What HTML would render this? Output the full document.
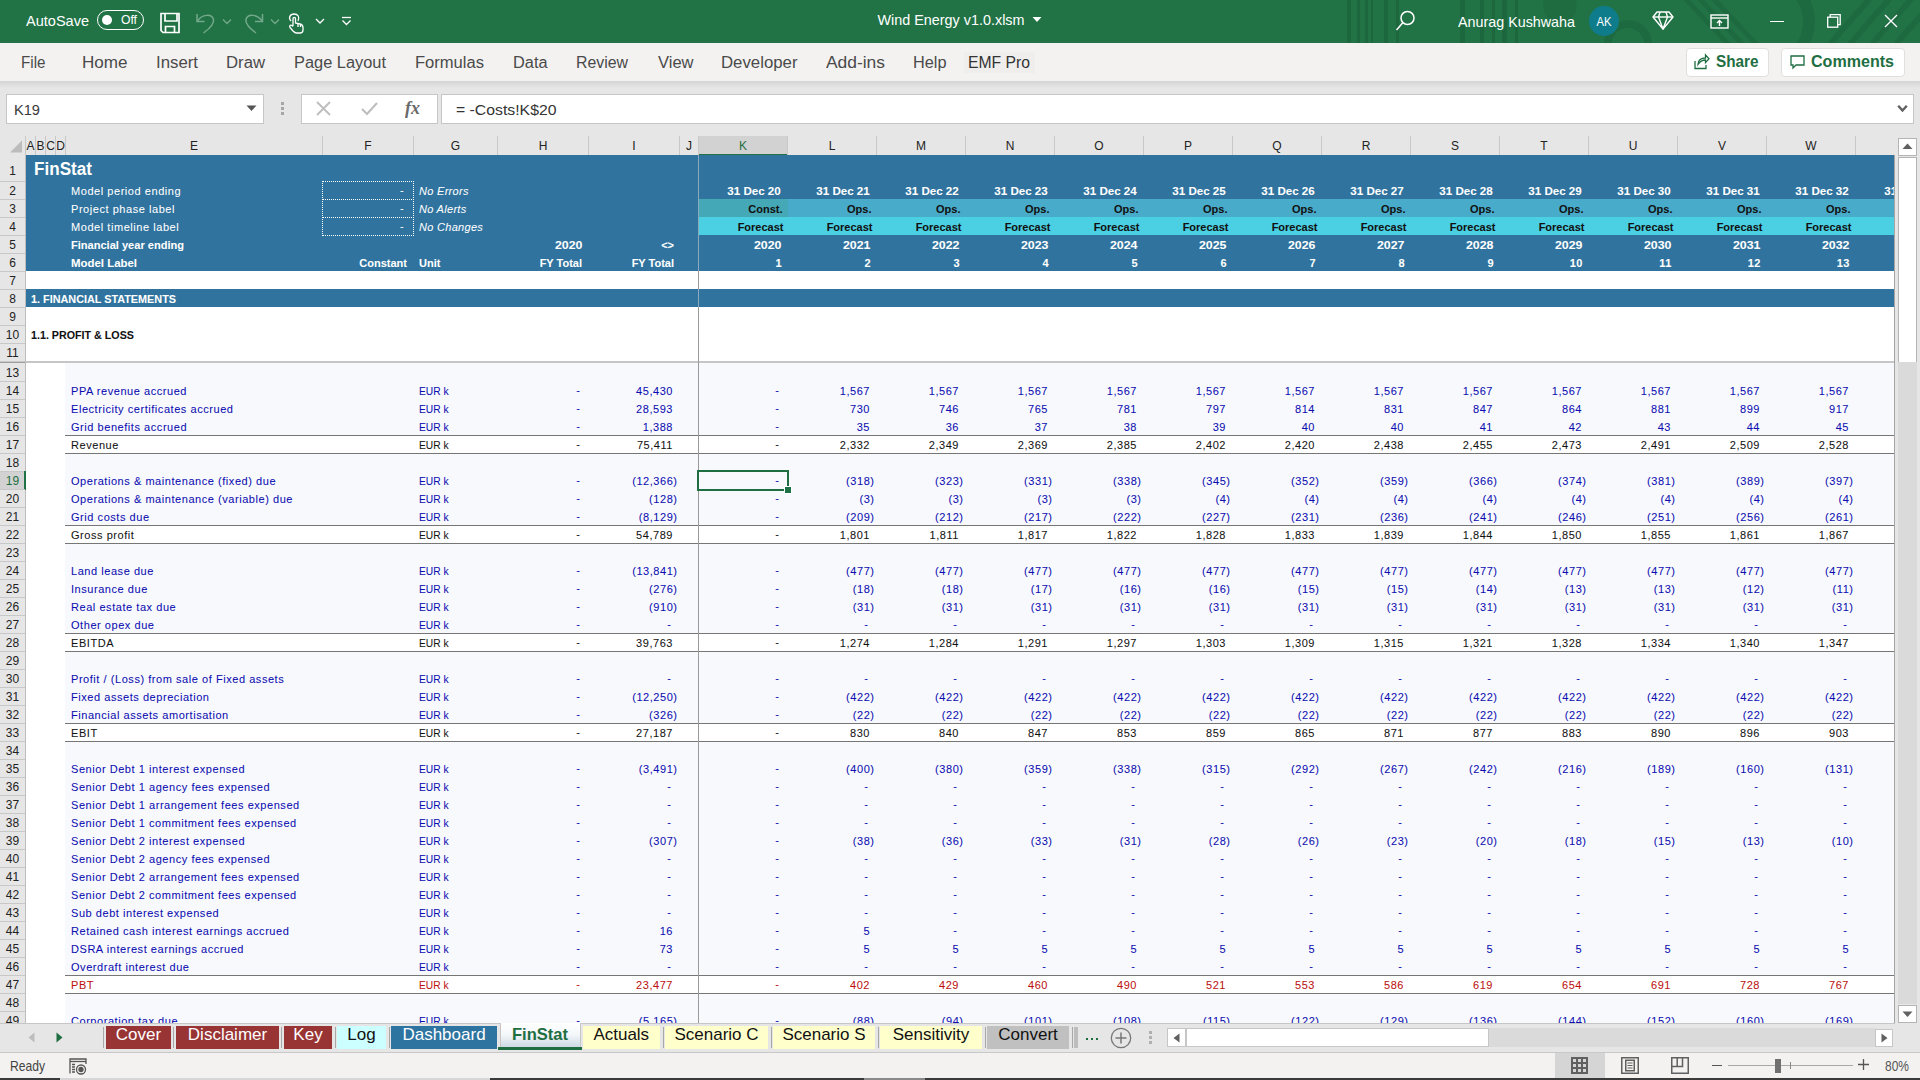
<!DOCTYPE html>
<html><head><meta charset="utf-8"><title>Wind Energy v1.0.xlsm - Excel</title>
<style>
*{box-sizing:border-box}
html,body{margin:0;padding:0}
body{width:1920px;height:1080px;overflow:hidden;position:relative;background:#fff;font-family:"Liberation Sans", sans-serif}
.a{position:absolute;white-space:nowrap}
.s{-webkit-text-stroke:0.05px currentColor}
svg.a{overflow:visible}
</style></head><body>
<div class="a" style="left:0px;top:0px;width:1920px;height:43px;background:#217346"></div>
<div class="a" style="left:1347px;top:0px;width:4px;height:43px;background:rgba(0,0,0,0.1)"></div>
<div class="a" style="left:1357px;top:0px;width:3px;height:43px;background:rgba(0,0,0,0.1)"></div>
<div class="a" style="left:1365px;top:0px;width:3px;height:43px;background:rgba(0,0,0,0.1)"></div>
<div class="a" style="left:1371px;top:0px;width:2px;height:43px;background:rgba(0,0,0,0.1)"></div>
<div class="a" style="left:1384px;top:0px;width:4px;height:43px;background:rgba(0,0,0,0.1)"></div>
<div class="a" style="left:1396px;top:0px;width:3px;height:43px;background:rgba(0,0,0,0.1)"></div>
<div class="a" style="left:1460px;top:0px;width:5px;height:43px;background:rgba(0,0,0,0.1)"></div>
<div class="a" style="left:1480px;top:0px;width:4px;height:43px;background:rgba(0,0,0,0.1)"></div>
<div class="a" style="left:1492px;top:0px;width:3px;height:43px;background:rgba(0,0,0,0.1)"></div>
<div class="a" style="left:1502px;top:0px;width:5px;height:43px;background:rgba(0,0,0,0.1)"></div>
<div class="a" style="left:1515px;top:0px;width:3px;height:43px;background:rgba(0,0,0,0.1)"></div>
<svg class="a" style="left:1500px;top:0" width="420" height="43"><g fill="none" stroke="rgba(0,0,0,0.075)"><circle cx="60" cy="6" r="17" fill="rgba(0,0,0,0.06)" stroke="none"/><circle cx="128" cy="44" r="20" stroke-width="8"/><path d="M182 -5 L232 48 M196 -5 L246 48 M210 -5 L260 48" stroke-width="5"/><path d="M300 -5 C312 10 312 33 300 48" stroke-width="12"/><path d="M330 44 L372 -4 M350 44 L392 -4 M372 44 L414 -4 M396 44 L438 -4" stroke-width="6"/></g></svg>
<div class="a" style="top:12.80px;font-size:15px;line-height:15px;color:#fff;left:26px;transform-origin:0 0;transform:scaleX(0.9685);">AutoSave</div>
<div class="a" style="left:97px;top:10px;width:47px;height:20px;border:1.5px solid #fff;border-radius:10px"></div>
<div class="a" style="left:101.75px;top:14.75px;width:10.5px;height:10.5px;background:#fff;border-radius:50%"></div>
<div class="a" style="top:13.27px;font-size:13.5px;line-height:13.5px;color:#fff;left:120.5px;transform-origin:0 0;transform:scaleX(0.9006);">Off</div>
<svg class="a" style="left:159px;top:12px" width="23" height="22" viewBox="0 0 23 22"><g fill="none" stroke="#fff" stroke-width="1.7"><path d="M2 1.5 H20 V20.5 H4 L2 18.5 Z"/><path d="M6 1.5 V9 H18 V1.5"/><path d="M6.5 20.5 V14.5 H15.5 V20.5"/></g></svg>
<svg class="a" style="left:195px;top:13px" width="22" height="21" viewBox="0 0 22 21"><g fill="none" stroke="#73a98a" stroke-width="1.5"><path d="M2 1 V8.5 H9.5"/><path d="M2.5 8 C7 1, 17 0.5, 18.5 6.5 C19.5 11, 14 16, 8.5 20"/></g></svg>
<svg class="a" style="left:222px;top:18px" width="10" height="8"><path d="M1 1.5 L5 5.5 L9 1.5" fill="none" stroke="#73a98a" stroke-width="1.3"/></svg>
<svg class="a" style="left:243px;top:13px" width="22" height="21" viewBox="0 0 22 21"><g fill="none" stroke="#73a98a" stroke-width="1.5"><path d="M19.5 1 V8.5 H12"/><path d="M19 8 C14.5 1, 4.5 0.5, 3 6.5 C2 11, 7.5 16, 13 20"/></g></svg>
<svg class="a" style="left:270px;top:18px" width="10" height="8"><path d="M1 1.5 L5 5.5 L9 1.5" fill="none" stroke="#73a98a" stroke-width="1.3"/></svg>
<svg class="a" style="left:288px;top:13px" width="17" height="21" viewBox="0 0 17 21"><g fill="none" stroke="#fff" stroke-width="1.3"><path d="M3 8 C0 5 2 1 6 1 C10 1 12 4 10 8"/><path d="M5 13 V5.5 C5 4 7.5 4 7.5 5.5 V10 L12 11 C14 11.5 15 12.5 15 14.5 V17 C15 19 13.5 20 12 20 H8.5 C7 20 6 19 5 18 L2 14.5 C1 13 2.5 11.5 4 12.5 L5 13.5"/><path d="M10 11 V14 M12.5 11.8 V14"/></g></svg>
<svg class="a" style="left:315px;top:17px" width="10" height="8"><path d="M1 2 L5 6 L9 2" fill="none" stroke="#fff" stroke-width="1.3"/></svg>
<svg class="a" style="left:341px;top:16px" width="11" height="11"><g fill="none" stroke="#fff" stroke-width="1.3"><path d="M1 1.5 H10"/><path d="M1.5 4.5 L5.5 8.5 L9.5 4.5"/></g></svg>
<div class="a" style="top:12.30px;font-size:15px;line-height:15px;color:#fff;left:951px;transform:translateX(-50%) scaleX(0.9583);">Wind Energy v1.0.xlsm</div>
<svg class="a" style="left:1032px;top:16px" width="10" height="8"><path d="M0.5 1 H9.5 L5 6 Z" fill="#fff"/></svg>
<svg class="a" style="left:1395px;top:9px" width="22" height="23" viewBox="0 0 22 23"><g fill="none" stroke="#fff" stroke-width="1.5"><circle cx="12.5" cy="9" r="6.5"/><path d="M8 13.5 L1.5 21"/></g></svg>
<div class="a" style="top:14.30px;font-size:15px;line-height:15px;color:#fff;left:1458px;transform-origin:0 0;transform:scaleX(0.9544);">Anurag Kushwaha</div>
<div class="a" style="left:1589px;top:6px;width:30px;height:30px;background:#0f7c8c;border-radius:50%"></div>
<div class="a" style="top:15.00px;font-size:13px;line-height:13px;color:#fff;left:1604px;transform:translateX(-50%) scaleX(0.8649);">AK</div>
<svg class="a" style="left:1652px;top:11px" width="22" height="19" viewBox="0 0 22 19"><g fill="none" stroke="#fff" stroke-width="1.4" stroke-linejoin="round"><path d="M5 1 H17 L21 6 L11 18 L1 6 Z"/><path d="M1 6 H21"/><path d="M8 1 L6.5 6 L11 18 L15.5 6 L14 1"/></g></svg>
<svg class="a" style="left:1710px;top:14px" width="19" height="15" viewBox="0 0 19 15"><g fill="none" stroke="#fff" stroke-width="1.4"><rect x="1" y="1" width="17" height="13"/><path d="M1 4 H18"/><path d="M9.5 12 V6.5 M7 9 L9.5 6.5 L12 9"/></g></svg>
<div class="a" style="left:1770px;top:21px;width:14px;height:1.2px;background:#fff"></div>
<svg class="a" style="left:1827px;top:14px" width="14" height="14" viewBox="0 0 14 14"><g fill="none" stroke="#fff" stroke-width="1.3"><rect x="0.7" y="3.2" width="10" height="10"/><path d="M3.2 3.2 V0.7 H13.2 V10.7 H10.7"/></g></svg>
<svg class="a" style="left:1884px;top:14px" width="14" height="14" viewBox="0 0 14 14"><path d="M1 1 L13 13 M13 1 L1 13" stroke="#fff" stroke-width="1.4"/></svg>
<div class="a" style="left:0px;top:43px;width:1920px;height:38px;background:#f3f2f1"></div>
<div class="a" style="left:0px;top:81px;width:1920px;height:7px;background:linear-gradient(#d4d4d4,#e6e6e6)"></div>
<div class="a" style="left:964px;top:52px;width:71px;height:21px;background:#efeeed"></div>
<div class="a" style="top:54.96px;font-size:16px;line-height:16px;color:#4a4a4a;left:21px;transform-origin:0 0;transform:scaleX(0.9503);">File</div>
<div class="a" style="top:54.96px;font-size:16px;line-height:16px;color:#4a4a4a;left:82px;transform-origin:0 0;transform:scaleX(1.0659);">Home</div>
<div class="a" style="top:54.96px;font-size:16px;line-height:16px;color:#4a4a4a;left:156px;transform-origin:0 0;transform:scaleX(1.0496);">Insert</div>
<div class="a" style="top:54.96px;font-size:16px;line-height:16px;color:#4a4a4a;left:226px;transform-origin:0 0;transform:scaleX(1.0444);">Draw</div>
<div class="a" style="top:54.96px;font-size:16px;line-height:16px;color:#4a4a4a;left:294px;transform-origin:0 0;transform:scaleX(1.0238);">Page Layout</div>
<div class="a" style="top:54.96px;font-size:16px;line-height:16px;color:#4a4a4a;left:415px;transform-origin:0 0;transform:scaleX(1.0347);">Formulas</div>
<div class="a" style="top:54.96px;font-size:16px;line-height:16px;color:#4a4a4a;left:512.5px;transform-origin:0 0;transform:scaleX(1.0208);">Data</div>
<div class="a" style="top:54.96px;font-size:16px;line-height:16px;color:#4a4a4a;left:576px;transform-origin:0 0;transform:scaleX(0.9911);">Review</div>
<div class="a" style="top:54.96px;font-size:16px;line-height:16px;color:#4a4a4a;left:657.5px;transform-origin:0 0;transform:scaleX(1.0323);">View</div>
<div class="a" style="top:54.96px;font-size:16px;line-height:16px;color:#4a4a4a;left:721px;transform-origin:0 0;transform:scaleX(1.0488);">Developer</div>
<div class="a" style="top:54.96px;font-size:16px;line-height:16px;color:#4a4a4a;left:826px;transform-origin:0 0;transform:scaleX(1.0876);">Add-ins</div>
<div class="a" style="top:54.96px;font-size:16px;line-height:16px;color:#4a4a4a;left:912.5px;transform-origin:0 0;transform:scaleX(1.0180);">Help</div>
<div class="a" style="top:54.96px;font-size:16px;line-height:16px;color:#333;left:967.5px;transform-origin:0 0;transform:scaleX(0.9822);">EMF Pro</div>
<div class="a" style="left:1686px;top:47.5px;width:83px;height:29px;background:#fff;border:1px solid #e1dfdd;border-radius:4px"></div>
<svg class="a" style="left:1694px;top:53px" width="16" height="17" viewBox="0 0 16 17"><g fill="none" stroke="#1e6e42" stroke-width="1.3"><path d="M1 8 V15.5 H12 V12"/><path d="M4 11.5 C4 7 7 5 11.5 5 V2 L15 5.8 L11.5 9.6 V7 C8 7 6 8.5 4 11.5 Z"/></g></svg>
<div class="a" style="top:54.46px;font-size:16px;line-height:16px;color:#1e6e42;font-weight:700;left:1715.5px;transform-origin:0 0;transform:scaleX(0.9557);">Share</div>
<div class="a" style="left:1780.5px;top:47.5px;width:124px;height:29px;background:#fff;border:1px solid #e1dfdd;border-radius:4px"></div>
<svg class="a" style="left:1790px;top:55px" width="15" height="15" viewBox="0 0 15 15"><path d="M1 1 H14 V10 H6 L3 13 V10 H1 Z" fill="none" stroke="#1e6e42" stroke-width="1.3"/></svg>
<div class="a" style="top:54.46px;font-size:16px;line-height:16px;color:#1e6e42;font-weight:700;left:1810.5px;transform-origin:0 0;transform:scaleX(1.0038);">Comments</div>
<div class="a" style="left:0px;top:88px;width:1920px;height:48px;background:#e6e6e6"></div>
<div class="a" style="left:6px;top:94px;width:258px;height:30px;background:#fff;border:1px solid #c6c6c6"></div>
<div class="a" style="top:101.88px;font-size:15.5px;line-height:15.5px;color:#3a3a3a;left:13.5px;transform-origin:0 0;transform:scaleX(0.9422);">K19</div>
<svg class="a" style="left:246px;top:105px" width="11" height="7"><path d="M0.5 0.5 H10.5 L5.5 6 Z" fill="#555"/></svg>
<div class="a" style="left:281px;top:102px;width:3px;height:3px;background:#a6a6a6"></div>
<div class="a" style="left:281px;top:107px;width:3px;height:3px;background:#a6a6a6"></div>
<div class="a" style="left:281px;top:112px;width:3px;height:3px;background:#a6a6a6"></div>
<div class="a" style="left:301px;top:94px;width:137px;height:30px;background:#fff;border:1px solid #c6c6c6"></div>
<svg class="a" style="left:316px;top:101px" width="15" height="15"><path d="M1 1 L14 14 M14 1 L1 14" stroke="#bdbdbd" stroke-width="1.8"/></svg>
<svg class="a" style="left:361px;top:102px" width="17" height="13"><path d="M1 7 L6 12 L16 1" fill="none" stroke="#bdbdbd" stroke-width="2"/></svg>
<div class="a" style="top:98.42px;font-size:19px;line-height:19px;color:#6a6a6a;font-weight:700;font-style:italic;left:405px;transform-origin:0 0;transform:scaleX(0.9464);font-family:'Liberation Serif',serif;">fx</div>
<div class="a" style="left:441px;top:94px;width:1473px;height:30px;background:#fff;border:1px solid #c6c6c6"></div>
<div class="a" style="top:101.80px;font-size:15px;line-height:15px;color:#333;left:455.5px;transform-origin:0 0;transform:scaleX(1.0527);">= -Costs!K$20</div>
<svg class="a" style="left:1897px;top:104px" width="11" height="9"><path d="M1.2 1.8 L5.5 6.5 L9.8 1.8" fill="none" stroke="#606060" stroke-width="2.4"/></svg>
<div class="a" style="left:0px;top:136px;width:1896px;height:20px;background:#e6e6e6;border-bottom:1px solid #c9c2bd"></div>
<svg class="a" style="left:9px;top:140px" width="14" height="13"><path d="M13 0.5 V12.5 H1 Z" fill="#bcbcbc"/></svg>
<div class="a" style="left:25px;top:136px;width:1px;height:19px;background:#c8c8c8"></div>
<div class="a" style="left:35px;top:136px;width:1px;height:19px;background:#c8c8c8"></div>
<div class="a" style="top:139.84px;font-size:12px;line-height:12px;color:#222;left:30.5px;transform:translateX(-50%) ;">A</div>
<div class="a" style="left:45px;top:136px;width:1px;height:19px;background:#c8c8c8"></div>
<div class="a" style="top:139.84px;font-size:12px;line-height:12px;color:#222;left:40.5px;transform:translateX(-50%) ;">B</div>
<div class="a" style="left:55px;top:136px;width:1px;height:19px;background:#c8c8c8"></div>
<div class="a" style="top:139.84px;font-size:12px;line-height:12px;color:#222;left:50.5px;transform:translateX(-50%) ;">C</div>
<div class="a" style="left:65px;top:136px;width:1px;height:19px;background:#c8c8c8"></div>
<div class="a" style="top:139.84px;font-size:12px;line-height:12px;color:#222;left:60.5px;transform:translateX(-50%) ;">D</div>
<div class="a" style="left:322px;top:136px;width:1px;height:19px;background:#c8c8c8"></div>
<div class="a" style="top:139.84px;font-size:12px;line-height:12px;color:#222;left:194.0px;transform:translateX(-50%) ;">E</div>
<div class="a" style="left:413px;top:136px;width:1px;height:19px;background:#c8c8c8"></div>
<div class="a" style="top:139.84px;font-size:12px;line-height:12px;color:#222;left:368.0px;transform:translateX(-50%) ;">F</div>
<div class="a" style="left:497px;top:136px;width:1px;height:19px;background:#c8c8c8"></div>
<div class="a" style="top:139.84px;font-size:12px;line-height:12px;color:#222;left:455.5px;transform:translateX(-50%) ;">G</div>
<div class="a" style="left:588px;top:136px;width:1px;height:19px;background:#c8c8c8"></div>
<div class="a" style="top:139.84px;font-size:12px;line-height:12px;color:#222;left:543.0px;transform:translateX(-50%) ;">H</div>
<div class="a" style="left:679px;top:136px;width:1px;height:19px;background:#c8c8c8"></div>
<div class="a" style="top:139.84px;font-size:12px;line-height:12px;color:#222;left:634.0px;transform:translateX(-50%) ;">I</div>
<div class="a" style="left:698px;top:136px;width:1px;height:19px;background:#c8c8c8"></div>
<div class="a" style="top:139.84px;font-size:12px;line-height:12px;color:#222;left:689.0px;transform:translateX(-50%) ;">J</div>
<div class="a" style="left:699px;top:136px;width:88px;height:19px;background:#d2d2d2"></div>
<div class="a" style="left:699px;top:154px;width:88px;height:2px;background:#217346"></div>
<div class="a" style="left:787px;top:136px;width:1px;height:19px;background:#c8c8c8"></div>
<div class="a" style="top:139.84px;font-size:12px;line-height:12px;color:#1e6e42;left:743.0px;transform:translateX(-50%) ;">K</div>
<div class="a" style="left:876px;top:136px;width:1px;height:19px;background:#c8c8c8"></div>
<div class="a" style="top:139.84px;font-size:12px;line-height:12px;color:#222;left:832.0px;transform:translateX(-50%) ;">L</div>
<div class="a" style="left:965px;top:136px;width:1px;height:19px;background:#c8c8c8"></div>
<div class="a" style="top:139.84px;font-size:12px;line-height:12px;color:#222;left:921.0px;transform:translateX(-50%) ;">M</div>
<div class="a" style="left:1054px;top:136px;width:1px;height:19px;background:#c8c8c8"></div>
<div class="a" style="top:139.84px;font-size:12px;line-height:12px;color:#222;left:1010.0px;transform:translateX(-50%) ;">N</div>
<div class="a" style="left:1143px;top:136px;width:1px;height:19px;background:#c8c8c8"></div>
<div class="a" style="top:139.84px;font-size:12px;line-height:12px;color:#222;left:1099.0px;transform:translateX(-50%) ;">O</div>
<div class="a" style="left:1232px;top:136px;width:1px;height:19px;background:#c8c8c8"></div>
<div class="a" style="top:139.84px;font-size:12px;line-height:12px;color:#222;left:1188.0px;transform:translateX(-50%) ;">P</div>
<div class="a" style="left:1321px;top:136px;width:1px;height:19px;background:#c8c8c8"></div>
<div class="a" style="top:139.84px;font-size:12px;line-height:12px;color:#222;left:1277.0px;transform:translateX(-50%) ;">Q</div>
<div class="a" style="left:1410px;top:136px;width:1px;height:19px;background:#c8c8c8"></div>
<div class="a" style="top:139.84px;font-size:12px;line-height:12px;color:#222;left:1366.0px;transform:translateX(-50%) ;">R</div>
<div class="a" style="left:1499px;top:136px;width:1px;height:19px;background:#c8c8c8"></div>
<div class="a" style="top:139.84px;font-size:12px;line-height:12px;color:#222;left:1455.0px;transform:translateX(-50%) ;">S</div>
<div class="a" style="left:1588px;top:136px;width:1px;height:19px;background:#c8c8c8"></div>
<div class="a" style="top:139.84px;font-size:12px;line-height:12px;color:#222;left:1544.0px;transform:translateX(-50%) ;">T</div>
<div class="a" style="left:1677px;top:136px;width:1px;height:19px;background:#c8c8c8"></div>
<div class="a" style="top:139.84px;font-size:12px;line-height:12px;color:#222;left:1633.0px;transform:translateX(-50%) ;">U</div>
<div class="a" style="left:1766px;top:136px;width:1px;height:19px;background:#c8c8c8"></div>
<div class="a" style="top:139.84px;font-size:12px;line-height:12px;color:#222;left:1722.0px;transform:translateX(-50%) ;">V</div>
<div class="a" style="left:1855px;top:136px;width:1px;height:19px;background:#c8c8c8"></div>
<div class="a" style="top:139.84px;font-size:12px;line-height:12px;color:#222;left:1811.0px;transform:translateX(-50%) ;">W</div>
<div class="a" style="left:1944px;top:136px;width:1px;height:19px;background:#c8c8c8"></div>
<div class="a" style="left:0px;top:155px;width:25px;height:868px;background:#e6e6e6"></div>
<div class="a" style="left:25px;top:155px;width:1px;height:868px;background:#bdbdbd"></div>
<div class="a" style="left:0px;top:181px;width:25px;height:1px;background:#c8c8c8"></div>
<div class="a" style="top:165.34px;font-size:12px;line-height:12px;color:#222;left:12.5px;transform:translateX(-50%) ;">1</div>
<div class="a" style="left:0px;top:199px;width:25px;height:1px;background:#c8c8c8"></div>
<div class="a" style="top:184.84px;font-size:12px;line-height:12px;color:#222;left:12.5px;transform:translateX(-50%) ;">2</div>
<div class="a" style="left:0px;top:217px;width:25px;height:1px;background:#c8c8c8"></div>
<div class="a" style="top:202.84px;font-size:12px;line-height:12px;color:#222;left:12.5px;transform:translateX(-50%) ;">3</div>
<div class="a" style="left:0px;top:235px;width:25px;height:1px;background:#c8c8c8"></div>
<div class="a" style="top:220.84px;font-size:12px;line-height:12px;color:#222;left:12.5px;transform:translateX(-50%) ;">4</div>
<div class="a" style="left:0px;top:253px;width:25px;height:1px;background:#c8c8c8"></div>
<div class="a" style="top:238.84px;font-size:12px;line-height:12px;color:#222;left:12.5px;transform:translateX(-50%) ;">5</div>
<div class="a" style="left:0px;top:271px;width:25px;height:1px;background:#c8c8c8"></div>
<div class="a" style="top:256.84px;font-size:12px;line-height:12px;color:#222;left:12.5px;transform:translateX(-50%) ;">6</div>
<div class="a" style="left:0px;top:289px;width:25px;height:1px;background:#c8c8c8"></div>
<div class="a" style="top:274.84px;font-size:12px;line-height:12px;color:#222;left:12.5px;transform:translateX(-50%) ;">7</div>
<div class="a" style="left:0px;top:307px;width:25px;height:1px;background:#c8c8c8"></div>
<div class="a" style="top:292.84px;font-size:12px;line-height:12px;color:#222;left:12.5px;transform:translateX(-50%) ;">8</div>
<div class="a" style="left:0px;top:325px;width:25px;height:1px;background:#c8c8c8"></div>
<div class="a" style="top:310.84px;font-size:12px;line-height:12px;color:#222;left:12.5px;transform:translateX(-50%) ;">9</div>
<div class="a" style="left:0px;top:343px;width:25px;height:1px;background:#c8c8c8"></div>
<div class="a" style="top:328.84px;font-size:12px;line-height:12px;color:#222;left:12.5px;transform:translateX(-50%) ;">10</div>
<div class="a" style="left:0px;top:361px;width:25px;height:1px;background:#c8c8c8"></div>
<div class="a" style="top:346.84px;font-size:12px;line-height:12px;color:#222;left:12.5px;transform:translateX(-50%) ;">11</div>
<div class="a" style="left:0px;top:381px;width:25px;height:1px;background:#c8c8c8"></div>
<div class="a" style="top:366.84px;font-size:12px;line-height:12px;color:#222;left:12.5px;transform:translateX(-50%) ;">13</div>
<div class="a" style="left:0px;top:399px;width:25px;height:1px;background:#c8c8c8"></div>
<div class="a" style="top:384.84px;font-size:12px;line-height:12px;color:#222;left:12.5px;transform:translateX(-50%) ;">14</div>
<div class="a" style="left:0px;top:417px;width:25px;height:1px;background:#c8c8c8"></div>
<div class="a" style="top:402.84px;font-size:12px;line-height:12px;color:#222;left:12.5px;transform:translateX(-50%) ;">15</div>
<div class="a" style="left:0px;top:435px;width:25px;height:1px;background:#c8c8c8"></div>
<div class="a" style="top:420.84px;font-size:12px;line-height:12px;color:#222;left:12.5px;transform:translateX(-50%) ;">16</div>
<div class="a" style="left:0px;top:453px;width:25px;height:1px;background:#c8c8c8"></div>
<div class="a" style="top:438.84px;font-size:12px;line-height:12px;color:#222;left:12.5px;transform:translateX(-50%) ;">17</div>
<div class="a" style="left:0px;top:471px;width:25px;height:1px;background:#c8c8c8"></div>
<div class="a" style="top:456.84px;font-size:12px;line-height:12px;color:#222;left:12.5px;transform:translateX(-50%) ;">18</div>
<div class="a" style="left:0px;top:472px;width:25px;height:17px;background:#d2d2d2"></div>
<div class="a" style="left:24px;top:471px;width:2px;height:18.5px;background:#217346"></div>
<div class="a" style="left:0px;top:489px;width:25px;height:1px;background:#c8c8c8"></div>
<div class="a" style="top:474.84px;font-size:12px;line-height:12px;color:#1e6e42;left:12.5px;transform:translateX(-50%) ;">19</div>
<div class="a" style="left:0px;top:507px;width:25px;height:1px;background:#c8c8c8"></div>
<div class="a" style="top:492.84px;font-size:12px;line-height:12px;color:#222;left:12.5px;transform:translateX(-50%) ;">20</div>
<div class="a" style="left:0px;top:525px;width:25px;height:1px;background:#c8c8c8"></div>
<div class="a" style="top:510.84px;font-size:12px;line-height:12px;color:#222;left:12.5px;transform:translateX(-50%) ;">21</div>
<div class="a" style="left:0px;top:543px;width:25px;height:1px;background:#c8c8c8"></div>
<div class="a" style="top:528.84px;font-size:12px;line-height:12px;color:#222;left:12.5px;transform:translateX(-50%) ;">22</div>
<div class="a" style="left:0px;top:561px;width:25px;height:1px;background:#c8c8c8"></div>
<div class="a" style="top:546.84px;font-size:12px;line-height:12px;color:#222;left:12.5px;transform:translateX(-50%) ;">23</div>
<div class="a" style="left:0px;top:579px;width:25px;height:1px;background:#c8c8c8"></div>
<div class="a" style="top:564.84px;font-size:12px;line-height:12px;color:#222;left:12.5px;transform:translateX(-50%) ;">24</div>
<div class="a" style="left:0px;top:597px;width:25px;height:1px;background:#c8c8c8"></div>
<div class="a" style="top:582.84px;font-size:12px;line-height:12px;color:#222;left:12.5px;transform:translateX(-50%) ;">25</div>
<div class="a" style="left:0px;top:615px;width:25px;height:1px;background:#c8c8c8"></div>
<div class="a" style="top:600.84px;font-size:12px;line-height:12px;color:#222;left:12.5px;transform:translateX(-50%) ;">26</div>
<div class="a" style="left:0px;top:633px;width:25px;height:1px;background:#c8c8c8"></div>
<div class="a" style="top:618.84px;font-size:12px;line-height:12px;color:#222;left:12.5px;transform:translateX(-50%) ;">27</div>
<div class="a" style="left:0px;top:651px;width:25px;height:1px;background:#c8c8c8"></div>
<div class="a" style="top:636.84px;font-size:12px;line-height:12px;color:#222;left:12.5px;transform:translateX(-50%) ;">28</div>
<div class="a" style="left:0px;top:669px;width:25px;height:1px;background:#c8c8c8"></div>
<div class="a" style="top:654.84px;font-size:12px;line-height:12px;color:#222;left:12.5px;transform:translateX(-50%) ;">29</div>
<div class="a" style="left:0px;top:687px;width:25px;height:1px;background:#c8c8c8"></div>
<div class="a" style="top:672.84px;font-size:12px;line-height:12px;color:#222;left:12.5px;transform:translateX(-50%) ;">30</div>
<div class="a" style="left:0px;top:705px;width:25px;height:1px;background:#c8c8c8"></div>
<div class="a" style="top:690.84px;font-size:12px;line-height:12px;color:#222;left:12.5px;transform:translateX(-50%) ;">31</div>
<div class="a" style="left:0px;top:723px;width:25px;height:1px;background:#c8c8c8"></div>
<div class="a" style="top:708.84px;font-size:12px;line-height:12px;color:#222;left:12.5px;transform:translateX(-50%) ;">32</div>
<div class="a" style="left:0px;top:741px;width:25px;height:1px;background:#c8c8c8"></div>
<div class="a" style="top:726.84px;font-size:12px;line-height:12px;color:#222;left:12.5px;transform:translateX(-50%) ;">33</div>
<div class="a" style="left:0px;top:759px;width:25px;height:1px;background:#c8c8c8"></div>
<div class="a" style="top:744.84px;font-size:12px;line-height:12px;color:#222;left:12.5px;transform:translateX(-50%) ;">34</div>
<div class="a" style="left:0px;top:777px;width:25px;height:1px;background:#c8c8c8"></div>
<div class="a" style="top:762.84px;font-size:12px;line-height:12px;color:#222;left:12.5px;transform:translateX(-50%) ;">35</div>
<div class="a" style="left:0px;top:795px;width:25px;height:1px;background:#c8c8c8"></div>
<div class="a" style="top:780.84px;font-size:12px;line-height:12px;color:#222;left:12.5px;transform:translateX(-50%) ;">36</div>
<div class="a" style="left:0px;top:813px;width:25px;height:1px;background:#c8c8c8"></div>
<div class="a" style="top:798.84px;font-size:12px;line-height:12px;color:#222;left:12.5px;transform:translateX(-50%) ;">37</div>
<div class="a" style="left:0px;top:831px;width:25px;height:1px;background:#c8c8c8"></div>
<div class="a" style="top:816.84px;font-size:12px;line-height:12px;color:#222;left:12.5px;transform:translateX(-50%) ;">38</div>
<div class="a" style="left:0px;top:849px;width:25px;height:1px;background:#c8c8c8"></div>
<div class="a" style="top:834.84px;font-size:12px;line-height:12px;color:#222;left:12.5px;transform:translateX(-50%) ;">39</div>
<div class="a" style="left:0px;top:867px;width:25px;height:1px;background:#c8c8c8"></div>
<div class="a" style="top:852.84px;font-size:12px;line-height:12px;color:#222;left:12.5px;transform:translateX(-50%) ;">40</div>
<div class="a" style="left:0px;top:885px;width:25px;height:1px;background:#c8c8c8"></div>
<div class="a" style="top:870.84px;font-size:12px;line-height:12px;color:#222;left:12.5px;transform:translateX(-50%) ;">41</div>
<div class="a" style="left:0px;top:903px;width:25px;height:1px;background:#c8c8c8"></div>
<div class="a" style="top:888.84px;font-size:12px;line-height:12px;color:#222;left:12.5px;transform:translateX(-50%) ;">42</div>
<div class="a" style="left:0px;top:921px;width:25px;height:1px;background:#c8c8c8"></div>
<div class="a" style="top:906.84px;font-size:12px;line-height:12px;color:#222;left:12.5px;transform:translateX(-50%) ;">43</div>
<div class="a" style="left:0px;top:939px;width:25px;height:1px;background:#c8c8c8"></div>
<div class="a" style="top:924.84px;font-size:12px;line-height:12px;color:#222;left:12.5px;transform:translateX(-50%) ;">44</div>
<div class="a" style="left:0px;top:957px;width:25px;height:1px;background:#c8c8c8"></div>
<div class="a" style="top:942.84px;font-size:12px;line-height:12px;color:#222;left:12.5px;transform:translateX(-50%) ;">45</div>
<div class="a" style="left:0px;top:975px;width:25px;height:1px;background:#c8c8c8"></div>
<div class="a" style="top:960.84px;font-size:12px;line-height:12px;color:#222;left:12.5px;transform:translateX(-50%) ;">46</div>
<div class="a" style="left:0px;top:993px;width:25px;height:1px;background:#c8c8c8"></div>
<div class="a" style="top:978.84px;font-size:12px;line-height:12px;color:#222;left:12.5px;transform:translateX(-50%) ;">47</div>
<div class="a" style="left:0px;top:1011px;width:25px;height:1px;background:#c8c8c8"></div>
<div class="a" style="top:996.84px;font-size:12px;line-height:12px;color:#222;left:12.5px;transform:translateX(-50%) ;">48</div>
<div class="a" style="top:1014.84px;font-size:12px;line-height:12px;color:#222;left:12.5px;transform:translateX(-50%) ;">49</div>
<div class="a" style="left:0px;top:362px;width:25px;height:1px;background:#9e9e9e"></div>
<div class="a" style="left:26px;top:155px;width:1868px;height:116px;background:#30739e"></div>
<div class="a" style="left:26px;top:289px;width:1868px;height:18px;background:#30739e"></div>
<div class="a" style="left:699px;top:199px;width:89px;height:18px;background:#45a8b6"></div>
<div class="a" style="left:788px;top:199px;width:1106px;height:18px;background:#48abca"></div>
<div class="a" style="left:699px;top:217px;width:1195px;height:18px;background:#4bcfe2"></div>
<div class="a" style="left:65px;top:363px;width:1829px;height:660px;background:#f7f9fd"></div>
<div class="a" style="left:65px;top:435px;width:1829px;height:19px;background:#fff;border-top:1px solid #767676;border-bottom:1px solid #767676"></div>
<div class="a" style="left:65px;top:525px;width:1829px;height:19px;background:#fff;border-top:1px solid #767676;border-bottom:1px solid #767676"></div>
<div class="a" style="left:65px;top:633px;width:1829px;height:19px;background:#fff;border-top:1px solid #767676;border-bottom:1px solid #767676"></div>
<div class="a" style="left:65px;top:723px;width:1829px;height:19px;background:#fff;border-top:1px solid #767676;border-bottom:1px solid #767676"></div>
<div class="a" style="left:65px;top:975px;width:1829px;height:19px;background:#fff;border-top:1px solid #767676;border-bottom:1px solid #767676"></div>
<div class="a" style="left:26px;top:361px;width:1868px;height:2px;background:#c6c6c6"></div>
<div class="a" style="left:698px;top:155px;width:1px;height:868px;background:#9a9a9a"></div>
<div class="a" style="left:698px;top:156px;width:1px;height:115px;background:#88a9be"></div>
<div class="a" style="left:698px;top:289px;width:1px;height:18px;background:#88a9be"></div>
<div class="a" style="left:1894px;top:155px;width:1px;height:868px;background:#a4a4a4"></div>
<div class="a" style="left:322px;top:181px;width:92px;height:55px;border:1.3px dotted #fff"></div>
<div class="a" style="left:322px;top:199px;width:92px;height:1px;border-top:1.3px dotted #fff"></div>
<div class="a" style="left:322px;top:217px;width:92px;height:1px;border-top:1.3px dotted #fff"></div>
<div class="a" style="left:0;top:0;width:1920px;height:1080px;clip-path:inset(0 26px 57px 0)">
<div class="a" style="top:160.69px;font-size:17.5px;line-height:17.5px;color:#fff;font-weight:700;left:34px;transform-origin:0 0;transform:scaleX(0.9779);">FinStat</div>
<div class="a s" style="top:185.69px;font-size:11px;line-height:11px;color:#fff;letter-spacing:0.55px;left:71px;">Model period ending</div>
<div class="a s" style="top:185.69px;font-size:11px;line-height:11px;color:#fff;font-style:italic;letter-spacing:0.3px;left:419px;">No Errors</div>
<div class="a s" style="top:185.19px;font-size:11px;line-height:11px;color:#fff;left:400px;">-</div>
<div class="a s" style="top:203.69px;font-size:11px;line-height:11px;color:#fff;letter-spacing:0.55px;left:71px;">Project phase label</div>
<div class="a s" style="top:203.69px;font-size:11px;line-height:11px;color:#fff;font-style:italic;letter-spacing:0.3px;left:419px;">No Alerts</div>
<div class="a s" style="top:203.19px;font-size:11px;line-height:11px;color:#fff;left:400px;">-</div>
<div class="a s" style="top:221.69px;font-size:11px;line-height:11px;color:#fff;letter-spacing:0.55px;left:71px;">Model timeline label</div>
<div class="a s" style="top:221.69px;font-size:11px;line-height:11px;color:#fff;font-style:italic;letter-spacing:0.3px;left:419px;">No Changes</div>
<div class="a s" style="top:221.19px;font-size:11px;line-height:11px;color:#fff;left:400px;">-</div>
<div class="a s" style="top:239.69px;font-size:11px;line-height:11px;color:#fff;font-weight:700;left:71px;transform-origin:0 0;transform:scaleX(1.0046);">Financial year ending</div>
<div class="a s" style="top:257.69px;font-size:11px;line-height:11px;color:#fff;font-weight:700;left:71px;transform-origin:0 0;transform:scaleX(1.0383);">Model Label</div>
<div class="a s" style="top:257.69px;font-size:11px;line-height:11px;color:#fff;font-weight:700;right:1513px;">Constant</div>
<div class="a s" style="top:257.69px;font-size:11px;line-height:11px;color:#fff;font-weight:700;left:419px;">Unit</div>
<div class="a s" style="top:239.69px;font-size:11px;line-height:11px;color:#fff;font-weight:700;right:1338px;transform-origin:100% 0;transform:scaleX(1.1232);">2020</div>
<div class="a s" style="top:257.69px;font-size:11px;line-height:11px;color:#fff;font-weight:700;right:1338px;">FY Total</div>
<div class="a s" style="top:239.69px;font-size:11px;line-height:11px;color:#fff;font-weight:700;right:1246px;">&lt;&gt;</div>
<div class="a s" style="top:257.69px;font-size:11px;line-height:11px;color:#fff;font-weight:700;right:1246px;">FY Total</div>
<div class="a s" style="top:185.69px;font-size:11px;line-height:11px;color:#fff;font-weight:700;right:1139.0px;transform-origin:100% 0;transform:scaleX(1.0539);">31 Dec 20</div>
<div class="a s" style="top:203.69px;font-size:11px;line-height:11px;color:#111;font-weight:700;right:1137.5px;">Const.</div>
<div class="a s" style="top:221.69px;font-size:11px;line-height:11px;color:#111;font-weight:700;right:1136.5px;">Forecast</div>
<div class="a s" style="top:239.69px;font-size:11px;line-height:11px;color:#fff;font-weight:700;right:1138.5px;transform-origin:100% 0;transform:scaleX(1.1232);">2020</div>
<div class="a s" style="top:257.69px;font-size:11px;line-height:11px;color:#fff;font-weight:700;letter-spacing:0.6px;right:1138.5px;margin-right:-0.6px;">1</div>
<div class="a s" style="top:185.69px;font-size:11px;line-height:11px;color:#fff;font-weight:700;right:1050.0px;transform-origin:100% 0;transform:scaleX(1.0539);">31 Dec 21</div>
<div class="a s" style="top:203.69px;font-size:11px;line-height:11px;color:#111;font-weight:700;right:1048.5px;">Ops.</div>
<div class="a s" style="top:221.69px;font-size:11px;line-height:11px;color:#111;font-weight:700;right:1047.5px;">Forecast</div>
<div class="a s" style="top:239.69px;font-size:11px;line-height:11px;color:#fff;font-weight:700;right:1049.5px;transform-origin:100% 0;transform:scaleX(1.1232);">2021</div>
<div class="a s" style="top:257.69px;font-size:11px;line-height:11px;color:#fff;font-weight:700;letter-spacing:0.6px;right:1049.5px;margin-right:-0.6px;">2</div>
<div class="a s" style="top:185.69px;font-size:11px;line-height:11px;color:#fff;font-weight:700;right:961.0px;transform-origin:100% 0;transform:scaleX(1.0539);">31 Dec 22</div>
<div class="a s" style="top:203.69px;font-size:11px;line-height:11px;color:#111;font-weight:700;right:959.5px;">Ops.</div>
<div class="a s" style="top:221.69px;font-size:11px;line-height:11px;color:#111;font-weight:700;right:958.5px;">Forecast</div>
<div class="a s" style="top:239.69px;font-size:11px;line-height:11px;color:#fff;font-weight:700;right:960.5px;transform-origin:100% 0;transform:scaleX(1.1232);">2022</div>
<div class="a s" style="top:257.69px;font-size:11px;line-height:11px;color:#fff;font-weight:700;letter-spacing:0.6px;right:960.5px;margin-right:-0.6px;">3</div>
<div class="a s" style="top:185.69px;font-size:11px;line-height:11px;color:#fff;font-weight:700;right:872.0px;transform-origin:100% 0;transform:scaleX(1.0539);">31 Dec 23</div>
<div class="a s" style="top:203.69px;font-size:11px;line-height:11px;color:#111;font-weight:700;right:870.5px;">Ops.</div>
<div class="a s" style="top:221.69px;font-size:11px;line-height:11px;color:#111;font-weight:700;right:869.5px;">Forecast</div>
<div class="a s" style="top:239.69px;font-size:11px;line-height:11px;color:#fff;font-weight:700;right:871.5px;transform-origin:100% 0;transform:scaleX(1.1232);">2023</div>
<div class="a s" style="top:257.69px;font-size:11px;line-height:11px;color:#fff;font-weight:700;letter-spacing:0.6px;right:871.5px;margin-right:-0.6px;">4</div>
<div class="a s" style="top:185.69px;font-size:11px;line-height:11px;color:#fff;font-weight:700;right:783.0px;transform-origin:100% 0;transform:scaleX(1.0539);">31 Dec 24</div>
<div class="a s" style="top:203.69px;font-size:11px;line-height:11px;color:#111;font-weight:700;right:781.5px;">Ops.</div>
<div class="a s" style="top:221.69px;font-size:11px;line-height:11px;color:#111;font-weight:700;right:780.5px;">Forecast</div>
<div class="a s" style="top:239.69px;font-size:11px;line-height:11px;color:#fff;font-weight:700;right:782.5px;transform-origin:100% 0;transform:scaleX(1.1232);">2024</div>
<div class="a s" style="top:257.69px;font-size:11px;line-height:11px;color:#fff;font-weight:700;letter-spacing:0.6px;right:782.5px;margin-right:-0.6px;">5</div>
<div class="a s" style="top:185.69px;font-size:11px;line-height:11px;color:#fff;font-weight:700;right:694.0px;transform-origin:100% 0;transform:scaleX(1.0539);">31 Dec 25</div>
<div class="a s" style="top:203.69px;font-size:11px;line-height:11px;color:#111;font-weight:700;right:692.5px;">Ops.</div>
<div class="a s" style="top:221.69px;font-size:11px;line-height:11px;color:#111;font-weight:700;right:691.5px;">Forecast</div>
<div class="a s" style="top:239.69px;font-size:11px;line-height:11px;color:#fff;font-weight:700;right:693.5px;transform-origin:100% 0;transform:scaleX(1.1232);">2025</div>
<div class="a s" style="top:257.69px;font-size:11px;line-height:11px;color:#fff;font-weight:700;letter-spacing:0.6px;right:693.5px;margin-right:-0.6px;">6</div>
<div class="a s" style="top:185.69px;font-size:11px;line-height:11px;color:#fff;font-weight:700;right:605.0px;transform-origin:100% 0;transform:scaleX(1.0539);">31 Dec 26</div>
<div class="a s" style="top:203.69px;font-size:11px;line-height:11px;color:#111;font-weight:700;right:603.5px;">Ops.</div>
<div class="a s" style="top:221.69px;font-size:11px;line-height:11px;color:#111;font-weight:700;right:602.5px;">Forecast</div>
<div class="a s" style="top:239.69px;font-size:11px;line-height:11px;color:#fff;font-weight:700;right:604.5px;transform-origin:100% 0;transform:scaleX(1.1232);">2026</div>
<div class="a s" style="top:257.69px;font-size:11px;line-height:11px;color:#fff;font-weight:700;letter-spacing:0.6px;right:604.5px;margin-right:-0.6px;">7</div>
<div class="a s" style="top:185.69px;font-size:11px;line-height:11px;color:#fff;font-weight:700;right:516.0px;transform-origin:100% 0;transform:scaleX(1.0539);">31 Dec 27</div>
<div class="a s" style="top:203.69px;font-size:11px;line-height:11px;color:#111;font-weight:700;right:514.5px;">Ops.</div>
<div class="a s" style="top:221.69px;font-size:11px;line-height:11px;color:#111;font-weight:700;right:513.5px;">Forecast</div>
<div class="a s" style="top:239.69px;font-size:11px;line-height:11px;color:#fff;font-weight:700;right:515.5px;transform-origin:100% 0;transform:scaleX(1.1232);">2027</div>
<div class="a s" style="top:257.69px;font-size:11px;line-height:11px;color:#fff;font-weight:700;letter-spacing:0.6px;right:515.5px;margin-right:-0.6px;">8</div>
<div class="a s" style="top:185.69px;font-size:11px;line-height:11px;color:#fff;font-weight:700;right:427.0px;transform-origin:100% 0;transform:scaleX(1.0539);">31 Dec 28</div>
<div class="a s" style="top:203.69px;font-size:11px;line-height:11px;color:#111;font-weight:700;right:425.5px;">Ops.</div>
<div class="a s" style="top:221.69px;font-size:11px;line-height:11px;color:#111;font-weight:700;right:424.5px;">Forecast</div>
<div class="a s" style="top:239.69px;font-size:11px;line-height:11px;color:#fff;font-weight:700;right:426.5px;transform-origin:100% 0;transform:scaleX(1.1232);">2028</div>
<div class="a s" style="top:257.69px;font-size:11px;line-height:11px;color:#fff;font-weight:700;letter-spacing:0.6px;right:426.5px;margin-right:-0.6px;">9</div>
<div class="a s" style="top:185.69px;font-size:11px;line-height:11px;color:#fff;font-weight:700;right:338.0px;transform-origin:100% 0;transform:scaleX(1.0539);">31 Dec 29</div>
<div class="a s" style="top:203.69px;font-size:11px;line-height:11px;color:#111;font-weight:700;right:336.5px;">Ops.</div>
<div class="a s" style="top:221.69px;font-size:11px;line-height:11px;color:#111;font-weight:700;right:335.5px;">Forecast</div>
<div class="a s" style="top:239.69px;font-size:11px;line-height:11px;color:#fff;font-weight:700;right:337.5px;transform-origin:100% 0;transform:scaleX(1.1232);">2029</div>
<div class="a s" style="top:257.69px;font-size:11px;line-height:11px;color:#fff;font-weight:700;letter-spacing:0.6px;right:337.5px;margin-right:-0.6px;">10</div>
<div class="a s" style="top:185.69px;font-size:11px;line-height:11px;color:#fff;font-weight:700;right:249.0px;transform-origin:100% 0;transform:scaleX(1.0539);">31 Dec 30</div>
<div class="a s" style="top:203.69px;font-size:11px;line-height:11px;color:#111;font-weight:700;right:247.5px;">Ops.</div>
<div class="a s" style="top:221.69px;font-size:11px;line-height:11px;color:#111;font-weight:700;right:246.5px;">Forecast</div>
<div class="a s" style="top:239.69px;font-size:11px;line-height:11px;color:#fff;font-weight:700;right:248.5px;transform-origin:100% 0;transform:scaleX(1.1232);">2030</div>
<div class="a s" style="top:257.69px;font-size:11px;line-height:11px;color:#fff;font-weight:700;letter-spacing:0.6px;right:248.5px;margin-right:-0.6px;">11</div>
<div class="a s" style="top:185.69px;font-size:11px;line-height:11px;color:#fff;font-weight:700;right:160.0px;transform-origin:100% 0;transform:scaleX(1.0539);">31 Dec 31</div>
<div class="a s" style="top:203.69px;font-size:11px;line-height:11px;color:#111;font-weight:700;right:158.5px;">Ops.</div>
<div class="a s" style="top:221.69px;font-size:11px;line-height:11px;color:#111;font-weight:700;right:157.5px;">Forecast</div>
<div class="a s" style="top:239.69px;font-size:11px;line-height:11px;color:#fff;font-weight:700;right:159.5px;transform-origin:100% 0;transform:scaleX(1.1232);">2031</div>
<div class="a s" style="top:257.69px;font-size:11px;line-height:11px;color:#fff;font-weight:700;letter-spacing:0.6px;right:159.5px;margin-right:-0.6px;">12</div>
<div class="a s" style="top:185.69px;font-size:11px;line-height:11px;color:#fff;font-weight:700;right:71.0px;transform-origin:100% 0;transform:scaleX(1.0539);">31 Dec 32</div>
<div class="a s" style="top:203.69px;font-size:11px;line-height:11px;color:#111;font-weight:700;right:69.5px;">Ops.</div>
<div class="a s" style="top:221.69px;font-size:11px;line-height:11px;color:#111;font-weight:700;right:68.5px;">Forecast</div>
<div class="a s" style="top:239.69px;font-size:11px;line-height:11px;color:#fff;font-weight:700;right:70.5px;transform-origin:100% 0;transform:scaleX(1.1232);">2032</div>
<div class="a s" style="top:257.69px;font-size:11px;line-height:11px;color:#fff;font-weight:700;letter-spacing:0.6px;right:70.5px;margin-right:-0.6px;">13</div>
<div class="a s" style="top:185.69px;font-size:11px;line-height:11px;color:#fff;font-weight:700;right:-18.0px;transform-origin:100% 0;transform:scaleX(1.0539);">31 Dec 33</div>
<div class="a s" style="top:203.69px;font-size:11px;line-height:11px;color:#111;font-weight:700;right:-19.5px;">Ops.</div>
<div class="a s" style="top:221.69px;font-size:11px;line-height:11px;color:#111;font-weight:700;right:-20.5px;">Forecast</div>
<div class="a s" style="top:239.69px;font-size:11px;line-height:11px;color:#fff;font-weight:700;right:-18.5px;transform-origin:100% 0;transform:scaleX(1.1232);">2033</div>
<div class="a s" style="top:257.69px;font-size:11px;line-height:11px;color:#fff;font-weight:700;letter-spacing:0.6px;right:-18.5px;margin-right:-0.6px;">14</div>
<div class="a s" style="top:293.69px;font-size:11px;line-height:11px;color:#fff;font-weight:700;left:31px;transform-origin:0 0;transform:scaleX(0.9845);">1. FINANCIAL STATEMENTS</div>
<div class="a s" style="top:329.69px;font-size:11px;line-height:11px;color:#111;font-weight:700;left:31px;transform-origin:0 0;transform:scaleX(0.9740);">1.1. PROFIT &amp; LOSS</div>
<div class="a s" style="top:385.69px;font-size:11px;line-height:11px;color:#0c0cb0;letter-spacing:0.55px;left:71px;">PPA revenue accrued</div>
<div class="a s" style="top:385.69px;font-size:11px;line-height:11px;color:#0c0cb0;left:419px;transform-origin:0 0;transform:scaleX(0.9282);">EUR k</div>
<div class="a s" style="top:384.89px;font-size:11px;line-height:11px;color:#0c0cb0;right:1340.0px;">-</div>
<div class="a s" style="top:385.69px;font-size:11px;line-height:11px;color:#0c0cb0;letter-spacing:0.55px;right:1247.5px;margin-right:-0.55px;">45,430</div>
<div class="a s" style="top:384.89px;font-size:11px;line-height:11px;color:#0c0cb0;right:1141.0px;">-</div>
<div class="a s" style="top:385.69px;font-size:11px;line-height:11px;color:#0c0cb0;letter-spacing:0.55px;right:1050.5px;margin-right:-0.55px;">1,567</div>
<div class="a s" style="top:385.69px;font-size:11px;line-height:11px;color:#0c0cb0;letter-spacing:0.55px;right:961.5px;margin-right:-0.55px;">1,567</div>
<div class="a s" style="top:385.69px;font-size:11px;line-height:11px;color:#0c0cb0;letter-spacing:0.55px;right:872.5px;margin-right:-0.55px;">1,567</div>
<div class="a s" style="top:385.69px;font-size:11px;line-height:11px;color:#0c0cb0;letter-spacing:0.55px;right:783.5px;margin-right:-0.55px;">1,567</div>
<div class="a s" style="top:385.69px;font-size:11px;line-height:11px;color:#0c0cb0;letter-spacing:0.55px;right:694.5px;margin-right:-0.55px;">1,567</div>
<div class="a s" style="top:385.69px;font-size:11px;line-height:11px;color:#0c0cb0;letter-spacing:0.55px;right:605.5px;margin-right:-0.55px;">1,567</div>
<div class="a s" style="top:385.69px;font-size:11px;line-height:11px;color:#0c0cb0;letter-spacing:0.55px;right:516.5px;margin-right:-0.55px;">1,567</div>
<div class="a s" style="top:385.69px;font-size:11px;line-height:11px;color:#0c0cb0;letter-spacing:0.55px;right:427.5px;margin-right:-0.55px;">1,567</div>
<div class="a s" style="top:385.69px;font-size:11px;line-height:11px;color:#0c0cb0;letter-spacing:0.55px;right:338.5px;margin-right:-0.55px;">1,567</div>
<div class="a s" style="top:385.69px;font-size:11px;line-height:11px;color:#0c0cb0;letter-spacing:0.55px;right:249.5px;margin-right:-0.55px;">1,567</div>
<div class="a s" style="top:385.69px;font-size:11px;line-height:11px;color:#0c0cb0;letter-spacing:0.55px;right:160.5px;margin-right:-0.55px;">1,567</div>
<div class="a s" style="top:385.69px;font-size:11px;line-height:11px;color:#0c0cb0;letter-spacing:0.55px;right:71.5px;margin-right:-0.55px;">1,567</div>
<div class="a s" style="top:403.69px;font-size:11px;line-height:11px;color:#0c0cb0;letter-spacing:0.55px;left:71px;">Electricity certificates accrued</div>
<div class="a s" style="top:403.69px;font-size:11px;line-height:11px;color:#0c0cb0;left:419px;transform-origin:0 0;transform:scaleX(0.9282);">EUR k</div>
<div class="a s" style="top:402.89px;font-size:11px;line-height:11px;color:#0c0cb0;right:1340.0px;">-</div>
<div class="a s" style="top:403.69px;font-size:11px;line-height:11px;color:#0c0cb0;letter-spacing:0.55px;right:1247.5px;margin-right:-0.55px;">28,593</div>
<div class="a s" style="top:402.89px;font-size:11px;line-height:11px;color:#0c0cb0;right:1141.0px;">-</div>
<div class="a s" style="top:403.69px;font-size:11px;line-height:11px;color:#0c0cb0;letter-spacing:0.55px;right:1050.5px;margin-right:-0.55px;">730</div>
<div class="a s" style="top:403.69px;font-size:11px;line-height:11px;color:#0c0cb0;letter-spacing:0.55px;right:961.5px;margin-right:-0.55px;">746</div>
<div class="a s" style="top:403.69px;font-size:11px;line-height:11px;color:#0c0cb0;letter-spacing:0.55px;right:872.5px;margin-right:-0.55px;">765</div>
<div class="a s" style="top:403.69px;font-size:11px;line-height:11px;color:#0c0cb0;letter-spacing:0.55px;right:783.5px;margin-right:-0.55px;">781</div>
<div class="a s" style="top:403.69px;font-size:11px;line-height:11px;color:#0c0cb0;letter-spacing:0.55px;right:694.5px;margin-right:-0.55px;">797</div>
<div class="a s" style="top:403.69px;font-size:11px;line-height:11px;color:#0c0cb0;letter-spacing:0.55px;right:605.5px;margin-right:-0.55px;">814</div>
<div class="a s" style="top:403.69px;font-size:11px;line-height:11px;color:#0c0cb0;letter-spacing:0.55px;right:516.5px;margin-right:-0.55px;">831</div>
<div class="a s" style="top:403.69px;font-size:11px;line-height:11px;color:#0c0cb0;letter-spacing:0.55px;right:427.5px;margin-right:-0.55px;">847</div>
<div class="a s" style="top:403.69px;font-size:11px;line-height:11px;color:#0c0cb0;letter-spacing:0.55px;right:338.5px;margin-right:-0.55px;">864</div>
<div class="a s" style="top:403.69px;font-size:11px;line-height:11px;color:#0c0cb0;letter-spacing:0.55px;right:249.5px;margin-right:-0.55px;">881</div>
<div class="a s" style="top:403.69px;font-size:11px;line-height:11px;color:#0c0cb0;letter-spacing:0.55px;right:160.5px;margin-right:-0.55px;">899</div>
<div class="a s" style="top:403.69px;font-size:11px;line-height:11px;color:#0c0cb0;letter-spacing:0.55px;right:71.5px;margin-right:-0.55px;">917</div>
<div class="a s" style="top:421.69px;font-size:11px;line-height:11px;color:#0c0cb0;letter-spacing:0.55px;left:71px;">Grid benefits accrued</div>
<div class="a s" style="top:421.69px;font-size:11px;line-height:11px;color:#0c0cb0;left:419px;transform-origin:0 0;transform:scaleX(0.9282);">EUR k</div>
<div class="a s" style="top:420.89px;font-size:11px;line-height:11px;color:#0c0cb0;right:1340.0px;">-</div>
<div class="a s" style="top:421.69px;font-size:11px;line-height:11px;color:#0c0cb0;letter-spacing:0.55px;right:1247.5px;margin-right:-0.55px;">1,388</div>
<div class="a s" style="top:420.89px;font-size:11px;line-height:11px;color:#0c0cb0;right:1141.0px;">-</div>
<div class="a s" style="top:421.69px;font-size:11px;line-height:11px;color:#0c0cb0;letter-spacing:0.55px;right:1050.5px;margin-right:-0.55px;">35</div>
<div class="a s" style="top:421.69px;font-size:11px;line-height:11px;color:#0c0cb0;letter-spacing:0.55px;right:961.5px;margin-right:-0.55px;">36</div>
<div class="a s" style="top:421.69px;font-size:11px;line-height:11px;color:#0c0cb0;letter-spacing:0.55px;right:872.5px;margin-right:-0.55px;">37</div>
<div class="a s" style="top:421.69px;font-size:11px;line-height:11px;color:#0c0cb0;letter-spacing:0.55px;right:783.5px;margin-right:-0.55px;">38</div>
<div class="a s" style="top:421.69px;font-size:11px;line-height:11px;color:#0c0cb0;letter-spacing:0.55px;right:694.5px;margin-right:-0.55px;">39</div>
<div class="a s" style="top:421.69px;font-size:11px;line-height:11px;color:#0c0cb0;letter-spacing:0.55px;right:605.5px;margin-right:-0.55px;">40</div>
<div class="a s" style="top:421.69px;font-size:11px;line-height:11px;color:#0c0cb0;letter-spacing:0.55px;right:516.5px;margin-right:-0.55px;">40</div>
<div class="a s" style="top:421.69px;font-size:11px;line-height:11px;color:#0c0cb0;letter-spacing:0.55px;right:427.5px;margin-right:-0.55px;">41</div>
<div class="a s" style="top:421.69px;font-size:11px;line-height:11px;color:#0c0cb0;letter-spacing:0.55px;right:338.5px;margin-right:-0.55px;">42</div>
<div class="a s" style="top:421.69px;font-size:11px;line-height:11px;color:#0c0cb0;letter-spacing:0.55px;right:249.5px;margin-right:-0.55px;">43</div>
<div class="a s" style="top:421.69px;font-size:11px;line-height:11px;color:#0c0cb0;letter-spacing:0.55px;right:160.5px;margin-right:-0.55px;">44</div>
<div class="a s" style="top:421.69px;font-size:11px;line-height:11px;color:#0c0cb0;letter-spacing:0.55px;right:71.5px;margin-right:-0.55px;">45</div>
<div class="a s" style="top:439.69px;font-size:11px;line-height:11px;color:#111;letter-spacing:0.55px;left:71px;">Revenue</div>
<div class="a s" style="top:439.69px;font-size:11px;line-height:11px;color:#111;left:419px;transform-origin:0 0;transform:scaleX(0.9282);">EUR k</div>
<div class="a s" style="top:438.89px;font-size:11px;line-height:11px;color:#111;right:1340.0px;">-</div>
<div class="a s" style="top:439.69px;font-size:11px;line-height:11px;color:#111;letter-spacing:0.55px;right:1247.5px;margin-right:-0.55px;">75,411</div>
<div class="a s" style="top:438.89px;font-size:11px;line-height:11px;color:#111;right:1141.0px;">-</div>
<div class="a s" style="top:439.69px;font-size:11px;line-height:11px;color:#111;letter-spacing:0.55px;right:1050.5px;margin-right:-0.55px;">2,332</div>
<div class="a s" style="top:439.69px;font-size:11px;line-height:11px;color:#111;letter-spacing:0.55px;right:961.5px;margin-right:-0.55px;">2,349</div>
<div class="a s" style="top:439.69px;font-size:11px;line-height:11px;color:#111;letter-spacing:0.55px;right:872.5px;margin-right:-0.55px;">2,369</div>
<div class="a s" style="top:439.69px;font-size:11px;line-height:11px;color:#111;letter-spacing:0.55px;right:783.5px;margin-right:-0.55px;">2,385</div>
<div class="a s" style="top:439.69px;font-size:11px;line-height:11px;color:#111;letter-spacing:0.55px;right:694.5px;margin-right:-0.55px;">2,402</div>
<div class="a s" style="top:439.69px;font-size:11px;line-height:11px;color:#111;letter-spacing:0.55px;right:605.5px;margin-right:-0.55px;">2,420</div>
<div class="a s" style="top:439.69px;font-size:11px;line-height:11px;color:#111;letter-spacing:0.55px;right:516.5px;margin-right:-0.55px;">2,438</div>
<div class="a s" style="top:439.69px;font-size:11px;line-height:11px;color:#111;letter-spacing:0.55px;right:427.5px;margin-right:-0.55px;">2,455</div>
<div class="a s" style="top:439.69px;font-size:11px;line-height:11px;color:#111;letter-spacing:0.55px;right:338.5px;margin-right:-0.55px;">2,473</div>
<div class="a s" style="top:439.69px;font-size:11px;line-height:11px;color:#111;letter-spacing:0.55px;right:249.5px;margin-right:-0.55px;">2,491</div>
<div class="a s" style="top:439.69px;font-size:11px;line-height:11px;color:#111;letter-spacing:0.55px;right:160.5px;margin-right:-0.55px;">2,509</div>
<div class="a s" style="top:439.69px;font-size:11px;line-height:11px;color:#111;letter-spacing:0.55px;right:71.5px;margin-right:-0.55px;">2,528</div>
<div class="a s" style="top:475.69px;font-size:11px;line-height:11px;color:#0c0cb0;letter-spacing:0.55px;left:71px;">Operations &amp; maintenance (fixed) due</div>
<div class="a s" style="top:475.69px;font-size:11px;line-height:11px;color:#0c0cb0;left:419px;transform-origin:0 0;transform:scaleX(0.9282);">EUR k</div>
<div class="a s" style="top:474.89px;font-size:11px;line-height:11px;color:#0c0cb0;right:1340.0px;">-</div>
<div class="a s" style="top:475.69px;font-size:11px;line-height:11px;color:#0c0cb0;letter-spacing:0.55px;right:1243.0px;margin-right:-0.55px;">(12,366)</div>
<div class="a s" style="top:474.89px;font-size:11px;line-height:11px;color:#0c0cb0;right:1141.0px;">-</div>
<div class="a s" style="top:475.69px;font-size:11px;line-height:11px;color:#0c0cb0;letter-spacing:0.55px;right:1046.0px;margin-right:-0.55px;">(318)</div>
<div class="a s" style="top:475.69px;font-size:11px;line-height:11px;color:#0c0cb0;letter-spacing:0.55px;right:957.0px;margin-right:-0.55px;">(323)</div>
<div class="a s" style="top:475.69px;font-size:11px;line-height:11px;color:#0c0cb0;letter-spacing:0.55px;right:868.0px;margin-right:-0.55px;">(331)</div>
<div class="a s" style="top:475.69px;font-size:11px;line-height:11px;color:#0c0cb0;letter-spacing:0.55px;right:779.0px;margin-right:-0.55px;">(338)</div>
<div class="a s" style="top:475.69px;font-size:11px;line-height:11px;color:#0c0cb0;letter-spacing:0.55px;right:690.0px;margin-right:-0.55px;">(345)</div>
<div class="a s" style="top:475.69px;font-size:11px;line-height:11px;color:#0c0cb0;letter-spacing:0.55px;right:601.0px;margin-right:-0.55px;">(352)</div>
<div class="a s" style="top:475.69px;font-size:11px;line-height:11px;color:#0c0cb0;letter-spacing:0.55px;right:512.0px;margin-right:-0.55px;">(359)</div>
<div class="a s" style="top:475.69px;font-size:11px;line-height:11px;color:#0c0cb0;letter-spacing:0.55px;right:423.0px;margin-right:-0.55px;">(366)</div>
<div class="a s" style="top:475.69px;font-size:11px;line-height:11px;color:#0c0cb0;letter-spacing:0.55px;right:334.0px;margin-right:-0.55px;">(374)</div>
<div class="a s" style="top:475.69px;font-size:11px;line-height:11px;color:#0c0cb0;letter-spacing:0.55px;right:245.0px;margin-right:-0.55px;">(381)</div>
<div class="a s" style="top:475.69px;font-size:11px;line-height:11px;color:#0c0cb0;letter-spacing:0.55px;right:156.0px;margin-right:-0.55px;">(389)</div>
<div class="a s" style="top:475.69px;font-size:11px;line-height:11px;color:#0c0cb0;letter-spacing:0.55px;right:67.0px;margin-right:-0.55px;">(397)</div>
<div class="a s" style="top:493.69px;font-size:11px;line-height:11px;color:#0c0cb0;letter-spacing:0.55px;left:71px;">Operations &amp; maintenance (variable) due</div>
<div class="a s" style="top:493.69px;font-size:11px;line-height:11px;color:#0c0cb0;left:419px;transform-origin:0 0;transform:scaleX(0.9282);">EUR k</div>
<div class="a s" style="top:492.89px;font-size:11px;line-height:11px;color:#0c0cb0;right:1340.0px;">-</div>
<div class="a s" style="top:493.69px;font-size:11px;line-height:11px;color:#0c0cb0;letter-spacing:0.55px;right:1243.0px;margin-right:-0.55px;">(128)</div>
<div class="a s" style="top:492.89px;font-size:11px;line-height:11px;color:#0c0cb0;right:1141.0px;">-</div>
<div class="a s" style="top:493.69px;font-size:11px;line-height:11px;color:#0c0cb0;letter-spacing:0.55px;right:1046.0px;margin-right:-0.55px;">(3)</div>
<div class="a s" style="top:493.69px;font-size:11px;line-height:11px;color:#0c0cb0;letter-spacing:0.55px;right:957.0px;margin-right:-0.55px;">(3)</div>
<div class="a s" style="top:493.69px;font-size:11px;line-height:11px;color:#0c0cb0;letter-spacing:0.55px;right:868.0px;margin-right:-0.55px;">(3)</div>
<div class="a s" style="top:493.69px;font-size:11px;line-height:11px;color:#0c0cb0;letter-spacing:0.55px;right:779.0px;margin-right:-0.55px;">(3)</div>
<div class="a s" style="top:493.69px;font-size:11px;line-height:11px;color:#0c0cb0;letter-spacing:0.55px;right:690.0px;margin-right:-0.55px;">(4)</div>
<div class="a s" style="top:493.69px;font-size:11px;line-height:11px;color:#0c0cb0;letter-spacing:0.55px;right:601.0px;margin-right:-0.55px;">(4)</div>
<div class="a s" style="top:493.69px;font-size:11px;line-height:11px;color:#0c0cb0;letter-spacing:0.55px;right:512.0px;margin-right:-0.55px;">(4)</div>
<div class="a s" style="top:493.69px;font-size:11px;line-height:11px;color:#0c0cb0;letter-spacing:0.55px;right:423.0px;margin-right:-0.55px;">(4)</div>
<div class="a s" style="top:493.69px;font-size:11px;line-height:11px;color:#0c0cb0;letter-spacing:0.55px;right:334.0px;margin-right:-0.55px;">(4)</div>
<div class="a s" style="top:493.69px;font-size:11px;line-height:11px;color:#0c0cb0;letter-spacing:0.55px;right:245.0px;margin-right:-0.55px;">(4)</div>
<div class="a s" style="top:493.69px;font-size:11px;line-height:11px;color:#0c0cb0;letter-spacing:0.55px;right:156.0px;margin-right:-0.55px;">(4)</div>
<div class="a s" style="top:493.69px;font-size:11px;line-height:11px;color:#0c0cb0;letter-spacing:0.55px;right:67.0px;margin-right:-0.55px;">(4)</div>
<div class="a s" style="top:511.69px;font-size:11px;line-height:11px;color:#0c0cb0;letter-spacing:0.55px;left:71px;">Grid costs due</div>
<div class="a s" style="top:511.69px;font-size:11px;line-height:11px;color:#0c0cb0;left:419px;transform-origin:0 0;transform:scaleX(0.9282);">EUR k</div>
<div class="a s" style="top:510.89px;font-size:11px;line-height:11px;color:#0c0cb0;right:1340.0px;">-</div>
<div class="a s" style="top:511.69px;font-size:11px;line-height:11px;color:#0c0cb0;letter-spacing:0.55px;right:1243.0px;margin-right:-0.55px;">(8,129)</div>
<div class="a s" style="top:510.89px;font-size:11px;line-height:11px;color:#0c0cb0;right:1141.0px;">-</div>
<div class="a s" style="top:511.69px;font-size:11px;line-height:11px;color:#0c0cb0;letter-spacing:0.55px;right:1046.0px;margin-right:-0.55px;">(209)</div>
<div class="a s" style="top:511.69px;font-size:11px;line-height:11px;color:#0c0cb0;letter-spacing:0.55px;right:957.0px;margin-right:-0.55px;">(212)</div>
<div class="a s" style="top:511.69px;font-size:11px;line-height:11px;color:#0c0cb0;letter-spacing:0.55px;right:868.0px;margin-right:-0.55px;">(217)</div>
<div class="a s" style="top:511.69px;font-size:11px;line-height:11px;color:#0c0cb0;letter-spacing:0.55px;right:779.0px;margin-right:-0.55px;">(222)</div>
<div class="a s" style="top:511.69px;font-size:11px;line-height:11px;color:#0c0cb0;letter-spacing:0.55px;right:690.0px;margin-right:-0.55px;">(227)</div>
<div class="a s" style="top:511.69px;font-size:11px;line-height:11px;color:#0c0cb0;letter-spacing:0.55px;right:601.0px;margin-right:-0.55px;">(231)</div>
<div class="a s" style="top:511.69px;font-size:11px;line-height:11px;color:#0c0cb0;letter-spacing:0.55px;right:512.0px;margin-right:-0.55px;">(236)</div>
<div class="a s" style="top:511.69px;font-size:11px;line-height:11px;color:#0c0cb0;letter-spacing:0.55px;right:423.0px;margin-right:-0.55px;">(241)</div>
<div class="a s" style="top:511.69px;font-size:11px;line-height:11px;color:#0c0cb0;letter-spacing:0.55px;right:334.0px;margin-right:-0.55px;">(246)</div>
<div class="a s" style="top:511.69px;font-size:11px;line-height:11px;color:#0c0cb0;letter-spacing:0.55px;right:245.0px;margin-right:-0.55px;">(251)</div>
<div class="a s" style="top:511.69px;font-size:11px;line-height:11px;color:#0c0cb0;letter-spacing:0.55px;right:156.0px;margin-right:-0.55px;">(256)</div>
<div class="a s" style="top:511.69px;font-size:11px;line-height:11px;color:#0c0cb0;letter-spacing:0.55px;right:67.0px;margin-right:-0.55px;">(261)</div>
<div class="a s" style="top:529.69px;font-size:11px;line-height:11px;color:#111;letter-spacing:0.55px;left:71px;">Gross profit</div>
<div class="a s" style="top:529.69px;font-size:11px;line-height:11px;color:#111;left:419px;transform-origin:0 0;transform:scaleX(0.9282);">EUR k</div>
<div class="a s" style="top:528.89px;font-size:11px;line-height:11px;color:#111;right:1340.0px;">-</div>
<div class="a s" style="top:529.69px;font-size:11px;line-height:11px;color:#111;letter-spacing:0.55px;right:1247.5px;margin-right:-0.55px;">54,789</div>
<div class="a s" style="top:528.89px;font-size:11px;line-height:11px;color:#111;right:1141.0px;">-</div>
<div class="a s" style="top:529.69px;font-size:11px;line-height:11px;color:#111;letter-spacing:0.55px;right:1050.5px;margin-right:-0.55px;">1,801</div>
<div class="a s" style="top:529.69px;font-size:11px;line-height:11px;color:#111;letter-spacing:0.55px;right:961.5px;margin-right:-0.55px;">1,811</div>
<div class="a s" style="top:529.69px;font-size:11px;line-height:11px;color:#111;letter-spacing:0.55px;right:872.5px;margin-right:-0.55px;">1,817</div>
<div class="a s" style="top:529.69px;font-size:11px;line-height:11px;color:#111;letter-spacing:0.55px;right:783.5px;margin-right:-0.55px;">1,822</div>
<div class="a s" style="top:529.69px;font-size:11px;line-height:11px;color:#111;letter-spacing:0.55px;right:694.5px;margin-right:-0.55px;">1,828</div>
<div class="a s" style="top:529.69px;font-size:11px;line-height:11px;color:#111;letter-spacing:0.55px;right:605.5px;margin-right:-0.55px;">1,833</div>
<div class="a s" style="top:529.69px;font-size:11px;line-height:11px;color:#111;letter-spacing:0.55px;right:516.5px;margin-right:-0.55px;">1,839</div>
<div class="a s" style="top:529.69px;font-size:11px;line-height:11px;color:#111;letter-spacing:0.55px;right:427.5px;margin-right:-0.55px;">1,844</div>
<div class="a s" style="top:529.69px;font-size:11px;line-height:11px;color:#111;letter-spacing:0.55px;right:338.5px;margin-right:-0.55px;">1,850</div>
<div class="a s" style="top:529.69px;font-size:11px;line-height:11px;color:#111;letter-spacing:0.55px;right:249.5px;margin-right:-0.55px;">1,855</div>
<div class="a s" style="top:529.69px;font-size:11px;line-height:11px;color:#111;letter-spacing:0.55px;right:160.5px;margin-right:-0.55px;">1,861</div>
<div class="a s" style="top:529.69px;font-size:11px;line-height:11px;color:#111;letter-spacing:0.55px;right:71.5px;margin-right:-0.55px;">1,867</div>
<div class="a s" style="top:565.69px;font-size:11px;line-height:11px;color:#0c0cb0;letter-spacing:0.55px;left:71px;">Land lease due</div>
<div class="a s" style="top:565.69px;font-size:11px;line-height:11px;color:#0c0cb0;left:419px;transform-origin:0 0;transform:scaleX(0.9282);">EUR k</div>
<div class="a s" style="top:564.89px;font-size:11px;line-height:11px;color:#0c0cb0;right:1340.0px;">-</div>
<div class="a s" style="top:565.69px;font-size:11px;line-height:11px;color:#0c0cb0;letter-spacing:0.55px;right:1243.0px;margin-right:-0.55px;">(13,841)</div>
<div class="a s" style="top:564.89px;font-size:11px;line-height:11px;color:#0c0cb0;right:1141.0px;">-</div>
<div class="a s" style="top:565.69px;font-size:11px;line-height:11px;color:#0c0cb0;letter-spacing:0.55px;right:1046.0px;margin-right:-0.55px;">(477)</div>
<div class="a s" style="top:565.69px;font-size:11px;line-height:11px;color:#0c0cb0;letter-spacing:0.55px;right:957.0px;margin-right:-0.55px;">(477)</div>
<div class="a s" style="top:565.69px;font-size:11px;line-height:11px;color:#0c0cb0;letter-spacing:0.55px;right:868.0px;margin-right:-0.55px;">(477)</div>
<div class="a s" style="top:565.69px;font-size:11px;line-height:11px;color:#0c0cb0;letter-spacing:0.55px;right:779.0px;margin-right:-0.55px;">(477)</div>
<div class="a s" style="top:565.69px;font-size:11px;line-height:11px;color:#0c0cb0;letter-spacing:0.55px;right:690.0px;margin-right:-0.55px;">(477)</div>
<div class="a s" style="top:565.69px;font-size:11px;line-height:11px;color:#0c0cb0;letter-spacing:0.55px;right:601.0px;margin-right:-0.55px;">(477)</div>
<div class="a s" style="top:565.69px;font-size:11px;line-height:11px;color:#0c0cb0;letter-spacing:0.55px;right:512.0px;margin-right:-0.55px;">(477)</div>
<div class="a s" style="top:565.69px;font-size:11px;line-height:11px;color:#0c0cb0;letter-spacing:0.55px;right:423.0px;margin-right:-0.55px;">(477)</div>
<div class="a s" style="top:565.69px;font-size:11px;line-height:11px;color:#0c0cb0;letter-spacing:0.55px;right:334.0px;margin-right:-0.55px;">(477)</div>
<div class="a s" style="top:565.69px;font-size:11px;line-height:11px;color:#0c0cb0;letter-spacing:0.55px;right:245.0px;margin-right:-0.55px;">(477)</div>
<div class="a s" style="top:565.69px;font-size:11px;line-height:11px;color:#0c0cb0;letter-spacing:0.55px;right:156.0px;margin-right:-0.55px;">(477)</div>
<div class="a s" style="top:565.69px;font-size:11px;line-height:11px;color:#0c0cb0;letter-spacing:0.55px;right:67.0px;margin-right:-0.55px;">(477)</div>
<div class="a s" style="top:583.69px;font-size:11px;line-height:11px;color:#0c0cb0;letter-spacing:0.55px;left:71px;">Insurance due</div>
<div class="a s" style="top:583.69px;font-size:11px;line-height:11px;color:#0c0cb0;left:419px;transform-origin:0 0;transform:scaleX(0.9282);">EUR k</div>
<div class="a s" style="top:582.89px;font-size:11px;line-height:11px;color:#0c0cb0;right:1340.0px;">-</div>
<div class="a s" style="top:583.69px;font-size:11px;line-height:11px;color:#0c0cb0;letter-spacing:0.55px;right:1243.0px;margin-right:-0.55px;">(276)</div>
<div class="a s" style="top:582.89px;font-size:11px;line-height:11px;color:#0c0cb0;right:1141.0px;">-</div>
<div class="a s" style="top:583.69px;font-size:11px;line-height:11px;color:#0c0cb0;letter-spacing:0.55px;right:1046.0px;margin-right:-0.55px;">(18)</div>
<div class="a s" style="top:583.69px;font-size:11px;line-height:11px;color:#0c0cb0;letter-spacing:0.55px;right:957.0px;margin-right:-0.55px;">(18)</div>
<div class="a s" style="top:583.69px;font-size:11px;line-height:11px;color:#0c0cb0;letter-spacing:0.55px;right:868.0px;margin-right:-0.55px;">(17)</div>
<div class="a s" style="top:583.69px;font-size:11px;line-height:11px;color:#0c0cb0;letter-spacing:0.55px;right:779.0px;margin-right:-0.55px;">(16)</div>
<div class="a s" style="top:583.69px;font-size:11px;line-height:11px;color:#0c0cb0;letter-spacing:0.55px;right:690.0px;margin-right:-0.55px;">(16)</div>
<div class="a s" style="top:583.69px;font-size:11px;line-height:11px;color:#0c0cb0;letter-spacing:0.55px;right:601.0px;margin-right:-0.55px;">(15)</div>
<div class="a s" style="top:583.69px;font-size:11px;line-height:11px;color:#0c0cb0;letter-spacing:0.55px;right:512.0px;margin-right:-0.55px;">(15)</div>
<div class="a s" style="top:583.69px;font-size:11px;line-height:11px;color:#0c0cb0;letter-spacing:0.55px;right:423.0px;margin-right:-0.55px;">(14)</div>
<div class="a s" style="top:583.69px;font-size:11px;line-height:11px;color:#0c0cb0;letter-spacing:0.55px;right:334.0px;margin-right:-0.55px;">(13)</div>
<div class="a s" style="top:583.69px;font-size:11px;line-height:11px;color:#0c0cb0;letter-spacing:0.55px;right:245.0px;margin-right:-0.55px;">(13)</div>
<div class="a s" style="top:583.69px;font-size:11px;line-height:11px;color:#0c0cb0;letter-spacing:0.55px;right:156.0px;margin-right:-0.55px;">(12)</div>
<div class="a s" style="top:583.69px;font-size:11px;line-height:11px;color:#0c0cb0;letter-spacing:0.55px;right:67.0px;margin-right:-0.55px;">(11)</div>
<div class="a s" style="top:601.69px;font-size:11px;line-height:11px;color:#0c0cb0;letter-spacing:0.55px;left:71px;">Real estate tax due</div>
<div class="a s" style="top:601.69px;font-size:11px;line-height:11px;color:#0c0cb0;left:419px;transform-origin:0 0;transform:scaleX(0.9282);">EUR k</div>
<div class="a s" style="top:600.89px;font-size:11px;line-height:11px;color:#0c0cb0;right:1340.0px;">-</div>
<div class="a s" style="top:601.69px;font-size:11px;line-height:11px;color:#0c0cb0;letter-spacing:0.55px;right:1243.0px;margin-right:-0.55px;">(910)</div>
<div class="a s" style="top:600.89px;font-size:11px;line-height:11px;color:#0c0cb0;right:1141.0px;">-</div>
<div class="a s" style="top:601.69px;font-size:11px;line-height:11px;color:#0c0cb0;letter-spacing:0.55px;right:1046.0px;margin-right:-0.55px;">(31)</div>
<div class="a s" style="top:601.69px;font-size:11px;line-height:11px;color:#0c0cb0;letter-spacing:0.55px;right:957.0px;margin-right:-0.55px;">(31)</div>
<div class="a s" style="top:601.69px;font-size:11px;line-height:11px;color:#0c0cb0;letter-spacing:0.55px;right:868.0px;margin-right:-0.55px;">(31)</div>
<div class="a s" style="top:601.69px;font-size:11px;line-height:11px;color:#0c0cb0;letter-spacing:0.55px;right:779.0px;margin-right:-0.55px;">(31)</div>
<div class="a s" style="top:601.69px;font-size:11px;line-height:11px;color:#0c0cb0;letter-spacing:0.55px;right:690.0px;margin-right:-0.55px;">(31)</div>
<div class="a s" style="top:601.69px;font-size:11px;line-height:11px;color:#0c0cb0;letter-spacing:0.55px;right:601.0px;margin-right:-0.55px;">(31)</div>
<div class="a s" style="top:601.69px;font-size:11px;line-height:11px;color:#0c0cb0;letter-spacing:0.55px;right:512.0px;margin-right:-0.55px;">(31)</div>
<div class="a s" style="top:601.69px;font-size:11px;line-height:11px;color:#0c0cb0;letter-spacing:0.55px;right:423.0px;margin-right:-0.55px;">(31)</div>
<div class="a s" style="top:601.69px;font-size:11px;line-height:11px;color:#0c0cb0;letter-spacing:0.55px;right:334.0px;margin-right:-0.55px;">(31)</div>
<div class="a s" style="top:601.69px;font-size:11px;line-height:11px;color:#0c0cb0;letter-spacing:0.55px;right:245.0px;margin-right:-0.55px;">(31)</div>
<div class="a s" style="top:601.69px;font-size:11px;line-height:11px;color:#0c0cb0;letter-spacing:0.55px;right:156.0px;margin-right:-0.55px;">(31)</div>
<div class="a s" style="top:601.69px;font-size:11px;line-height:11px;color:#0c0cb0;letter-spacing:0.55px;right:67.0px;margin-right:-0.55px;">(31)</div>
<div class="a s" style="top:619.69px;font-size:11px;line-height:11px;color:#0c0cb0;letter-spacing:0.55px;left:71px;">Other opex due</div>
<div class="a s" style="top:619.69px;font-size:11px;line-height:11px;color:#0c0cb0;left:419px;transform-origin:0 0;transform:scaleX(0.9282);">EUR k</div>
<div class="a s" style="top:618.89px;font-size:11px;line-height:11px;color:#0c0cb0;right:1340.0px;">-</div>
<div class="a s" style="top:618.89px;font-size:11px;line-height:11px;color:#0c0cb0;right:1249.0px;">-</div>
<div class="a s" style="top:618.89px;font-size:11px;line-height:11px;color:#0c0cb0;right:1141.0px;">-</div>
<div class="a s" style="top:618.89px;font-size:11px;line-height:11px;color:#0c0cb0;right:1052.0px;">-</div>
<div class="a s" style="top:618.89px;font-size:11px;line-height:11px;color:#0c0cb0;right:963.0px;">-</div>
<div class="a s" style="top:618.89px;font-size:11px;line-height:11px;color:#0c0cb0;right:874.0px;">-</div>
<div class="a s" style="top:618.89px;font-size:11px;line-height:11px;color:#0c0cb0;right:785.0px;">-</div>
<div class="a s" style="top:618.89px;font-size:11px;line-height:11px;color:#0c0cb0;right:696.0px;">-</div>
<div class="a s" style="top:618.89px;font-size:11px;line-height:11px;color:#0c0cb0;right:607.0px;">-</div>
<div class="a s" style="top:618.89px;font-size:11px;line-height:11px;color:#0c0cb0;right:518.0px;">-</div>
<div class="a s" style="top:618.89px;font-size:11px;line-height:11px;color:#0c0cb0;right:429.0px;">-</div>
<div class="a s" style="top:618.89px;font-size:11px;line-height:11px;color:#0c0cb0;right:340.0px;">-</div>
<div class="a s" style="top:618.89px;font-size:11px;line-height:11px;color:#0c0cb0;right:251.0px;">-</div>
<div class="a s" style="top:618.89px;font-size:11px;line-height:11px;color:#0c0cb0;right:162.0px;">-</div>
<div class="a s" style="top:618.89px;font-size:11px;line-height:11px;color:#0c0cb0;right:73.0px;">-</div>
<div class="a s" style="top:637.69px;font-size:11px;line-height:11px;color:#111;letter-spacing:0.55px;left:71px;">EBITDA</div>
<div class="a s" style="top:637.69px;font-size:11px;line-height:11px;color:#111;left:419px;transform-origin:0 0;transform:scaleX(0.9282);">EUR k</div>
<div class="a s" style="top:636.89px;font-size:11px;line-height:11px;color:#111;right:1340.0px;">-</div>
<div class="a s" style="top:637.69px;font-size:11px;line-height:11px;color:#111;letter-spacing:0.55px;right:1247.5px;margin-right:-0.55px;">39,763</div>
<div class="a s" style="top:636.89px;font-size:11px;line-height:11px;color:#111;right:1141.0px;">-</div>
<div class="a s" style="top:637.69px;font-size:11px;line-height:11px;color:#111;letter-spacing:0.55px;right:1050.5px;margin-right:-0.55px;">1,274</div>
<div class="a s" style="top:637.69px;font-size:11px;line-height:11px;color:#111;letter-spacing:0.55px;right:961.5px;margin-right:-0.55px;">1,284</div>
<div class="a s" style="top:637.69px;font-size:11px;line-height:11px;color:#111;letter-spacing:0.55px;right:872.5px;margin-right:-0.55px;">1,291</div>
<div class="a s" style="top:637.69px;font-size:11px;line-height:11px;color:#111;letter-spacing:0.55px;right:783.5px;margin-right:-0.55px;">1,297</div>
<div class="a s" style="top:637.69px;font-size:11px;line-height:11px;color:#111;letter-spacing:0.55px;right:694.5px;margin-right:-0.55px;">1,303</div>
<div class="a s" style="top:637.69px;font-size:11px;line-height:11px;color:#111;letter-spacing:0.55px;right:605.5px;margin-right:-0.55px;">1,309</div>
<div class="a s" style="top:637.69px;font-size:11px;line-height:11px;color:#111;letter-spacing:0.55px;right:516.5px;margin-right:-0.55px;">1,315</div>
<div class="a s" style="top:637.69px;font-size:11px;line-height:11px;color:#111;letter-spacing:0.55px;right:427.5px;margin-right:-0.55px;">1,321</div>
<div class="a s" style="top:637.69px;font-size:11px;line-height:11px;color:#111;letter-spacing:0.55px;right:338.5px;margin-right:-0.55px;">1,328</div>
<div class="a s" style="top:637.69px;font-size:11px;line-height:11px;color:#111;letter-spacing:0.55px;right:249.5px;margin-right:-0.55px;">1,334</div>
<div class="a s" style="top:637.69px;font-size:11px;line-height:11px;color:#111;letter-spacing:0.55px;right:160.5px;margin-right:-0.55px;">1,340</div>
<div class="a s" style="top:637.69px;font-size:11px;line-height:11px;color:#111;letter-spacing:0.55px;right:71.5px;margin-right:-0.55px;">1,347</div>
<div class="a s" style="top:673.69px;font-size:11px;line-height:11px;color:#0c0cb0;letter-spacing:0.55px;left:71px;">Profit / (Loss) from sale of Fixed assets</div>
<div class="a s" style="top:673.69px;font-size:11px;line-height:11px;color:#0c0cb0;left:419px;transform-origin:0 0;transform:scaleX(0.9282);">EUR k</div>
<div class="a s" style="top:672.89px;font-size:11px;line-height:11px;color:#0c0cb0;right:1340.0px;">-</div>
<div class="a s" style="top:672.89px;font-size:11px;line-height:11px;color:#0c0cb0;right:1249.0px;">-</div>
<div class="a s" style="top:672.89px;font-size:11px;line-height:11px;color:#0c0cb0;right:1141.0px;">-</div>
<div class="a s" style="top:672.89px;font-size:11px;line-height:11px;color:#0c0cb0;right:1052.0px;">-</div>
<div class="a s" style="top:672.89px;font-size:11px;line-height:11px;color:#0c0cb0;right:963.0px;">-</div>
<div class="a s" style="top:672.89px;font-size:11px;line-height:11px;color:#0c0cb0;right:874.0px;">-</div>
<div class="a s" style="top:672.89px;font-size:11px;line-height:11px;color:#0c0cb0;right:785.0px;">-</div>
<div class="a s" style="top:672.89px;font-size:11px;line-height:11px;color:#0c0cb0;right:696.0px;">-</div>
<div class="a s" style="top:672.89px;font-size:11px;line-height:11px;color:#0c0cb0;right:607.0px;">-</div>
<div class="a s" style="top:672.89px;font-size:11px;line-height:11px;color:#0c0cb0;right:518.0px;">-</div>
<div class="a s" style="top:672.89px;font-size:11px;line-height:11px;color:#0c0cb0;right:429.0px;">-</div>
<div class="a s" style="top:672.89px;font-size:11px;line-height:11px;color:#0c0cb0;right:340.0px;">-</div>
<div class="a s" style="top:672.89px;font-size:11px;line-height:11px;color:#0c0cb0;right:251.0px;">-</div>
<div class="a s" style="top:672.89px;font-size:11px;line-height:11px;color:#0c0cb0;right:162.0px;">-</div>
<div class="a s" style="top:672.89px;font-size:11px;line-height:11px;color:#0c0cb0;right:73.0px;">-</div>
<div class="a s" style="top:691.69px;font-size:11px;line-height:11px;color:#0c0cb0;letter-spacing:0.55px;left:71px;">Fixed assets depreciation</div>
<div class="a s" style="top:691.69px;font-size:11px;line-height:11px;color:#0c0cb0;left:419px;transform-origin:0 0;transform:scaleX(0.9282);">EUR k</div>
<div class="a s" style="top:690.89px;font-size:11px;line-height:11px;color:#0c0cb0;right:1340.0px;">-</div>
<div class="a s" style="top:691.69px;font-size:11px;line-height:11px;color:#0c0cb0;letter-spacing:0.55px;right:1243.0px;margin-right:-0.55px;">(12,250)</div>
<div class="a s" style="top:690.89px;font-size:11px;line-height:11px;color:#0c0cb0;right:1141.0px;">-</div>
<div class="a s" style="top:691.69px;font-size:11px;line-height:11px;color:#0c0cb0;letter-spacing:0.55px;right:1046.0px;margin-right:-0.55px;">(422)</div>
<div class="a s" style="top:691.69px;font-size:11px;line-height:11px;color:#0c0cb0;letter-spacing:0.55px;right:957.0px;margin-right:-0.55px;">(422)</div>
<div class="a s" style="top:691.69px;font-size:11px;line-height:11px;color:#0c0cb0;letter-spacing:0.55px;right:868.0px;margin-right:-0.55px;">(422)</div>
<div class="a s" style="top:691.69px;font-size:11px;line-height:11px;color:#0c0cb0;letter-spacing:0.55px;right:779.0px;margin-right:-0.55px;">(422)</div>
<div class="a s" style="top:691.69px;font-size:11px;line-height:11px;color:#0c0cb0;letter-spacing:0.55px;right:690.0px;margin-right:-0.55px;">(422)</div>
<div class="a s" style="top:691.69px;font-size:11px;line-height:11px;color:#0c0cb0;letter-spacing:0.55px;right:601.0px;margin-right:-0.55px;">(422)</div>
<div class="a s" style="top:691.69px;font-size:11px;line-height:11px;color:#0c0cb0;letter-spacing:0.55px;right:512.0px;margin-right:-0.55px;">(422)</div>
<div class="a s" style="top:691.69px;font-size:11px;line-height:11px;color:#0c0cb0;letter-spacing:0.55px;right:423.0px;margin-right:-0.55px;">(422)</div>
<div class="a s" style="top:691.69px;font-size:11px;line-height:11px;color:#0c0cb0;letter-spacing:0.55px;right:334.0px;margin-right:-0.55px;">(422)</div>
<div class="a s" style="top:691.69px;font-size:11px;line-height:11px;color:#0c0cb0;letter-spacing:0.55px;right:245.0px;margin-right:-0.55px;">(422)</div>
<div class="a s" style="top:691.69px;font-size:11px;line-height:11px;color:#0c0cb0;letter-spacing:0.55px;right:156.0px;margin-right:-0.55px;">(422)</div>
<div class="a s" style="top:691.69px;font-size:11px;line-height:11px;color:#0c0cb0;letter-spacing:0.55px;right:67.0px;margin-right:-0.55px;">(422)</div>
<div class="a s" style="top:709.69px;font-size:11px;line-height:11px;color:#0c0cb0;letter-spacing:0.55px;left:71px;">Financial assets amortisation</div>
<div class="a s" style="top:709.69px;font-size:11px;line-height:11px;color:#0c0cb0;left:419px;transform-origin:0 0;transform:scaleX(0.9282);">EUR k</div>
<div class="a s" style="top:708.89px;font-size:11px;line-height:11px;color:#0c0cb0;right:1340.0px;">-</div>
<div class="a s" style="top:709.69px;font-size:11px;line-height:11px;color:#0c0cb0;letter-spacing:0.55px;right:1243.0px;margin-right:-0.55px;">(326)</div>
<div class="a s" style="top:708.89px;font-size:11px;line-height:11px;color:#0c0cb0;right:1141.0px;">-</div>
<div class="a s" style="top:709.69px;font-size:11px;line-height:11px;color:#0c0cb0;letter-spacing:0.55px;right:1046.0px;margin-right:-0.55px;">(22)</div>
<div class="a s" style="top:709.69px;font-size:11px;line-height:11px;color:#0c0cb0;letter-spacing:0.55px;right:957.0px;margin-right:-0.55px;">(22)</div>
<div class="a s" style="top:709.69px;font-size:11px;line-height:11px;color:#0c0cb0;letter-spacing:0.55px;right:868.0px;margin-right:-0.55px;">(22)</div>
<div class="a s" style="top:709.69px;font-size:11px;line-height:11px;color:#0c0cb0;letter-spacing:0.55px;right:779.0px;margin-right:-0.55px;">(22)</div>
<div class="a s" style="top:709.69px;font-size:11px;line-height:11px;color:#0c0cb0;letter-spacing:0.55px;right:690.0px;margin-right:-0.55px;">(22)</div>
<div class="a s" style="top:709.69px;font-size:11px;line-height:11px;color:#0c0cb0;letter-spacing:0.55px;right:601.0px;margin-right:-0.55px;">(22)</div>
<div class="a s" style="top:709.69px;font-size:11px;line-height:11px;color:#0c0cb0;letter-spacing:0.55px;right:512.0px;margin-right:-0.55px;">(22)</div>
<div class="a s" style="top:709.69px;font-size:11px;line-height:11px;color:#0c0cb0;letter-spacing:0.55px;right:423.0px;margin-right:-0.55px;">(22)</div>
<div class="a s" style="top:709.69px;font-size:11px;line-height:11px;color:#0c0cb0;letter-spacing:0.55px;right:334.0px;margin-right:-0.55px;">(22)</div>
<div class="a s" style="top:709.69px;font-size:11px;line-height:11px;color:#0c0cb0;letter-spacing:0.55px;right:245.0px;margin-right:-0.55px;">(22)</div>
<div class="a s" style="top:709.69px;font-size:11px;line-height:11px;color:#0c0cb0;letter-spacing:0.55px;right:156.0px;margin-right:-0.55px;">(22)</div>
<div class="a s" style="top:709.69px;font-size:11px;line-height:11px;color:#0c0cb0;letter-spacing:0.55px;right:67.0px;margin-right:-0.55px;">(22)</div>
<div class="a s" style="top:727.69px;font-size:11px;line-height:11px;color:#111;letter-spacing:0.55px;left:71px;">EBIT</div>
<div class="a s" style="top:727.69px;font-size:11px;line-height:11px;color:#111;left:419px;transform-origin:0 0;transform:scaleX(0.9282);">EUR k</div>
<div class="a s" style="top:726.89px;font-size:11px;line-height:11px;color:#111;right:1340.0px;">-</div>
<div class="a s" style="top:727.69px;font-size:11px;line-height:11px;color:#111;letter-spacing:0.55px;right:1247.5px;margin-right:-0.55px;">27,187</div>
<div class="a s" style="top:726.89px;font-size:11px;line-height:11px;color:#111;right:1141.0px;">-</div>
<div class="a s" style="top:727.69px;font-size:11px;line-height:11px;color:#111;letter-spacing:0.55px;right:1050.5px;margin-right:-0.55px;">830</div>
<div class="a s" style="top:727.69px;font-size:11px;line-height:11px;color:#111;letter-spacing:0.55px;right:961.5px;margin-right:-0.55px;">840</div>
<div class="a s" style="top:727.69px;font-size:11px;line-height:11px;color:#111;letter-spacing:0.55px;right:872.5px;margin-right:-0.55px;">847</div>
<div class="a s" style="top:727.69px;font-size:11px;line-height:11px;color:#111;letter-spacing:0.55px;right:783.5px;margin-right:-0.55px;">853</div>
<div class="a s" style="top:727.69px;font-size:11px;line-height:11px;color:#111;letter-spacing:0.55px;right:694.5px;margin-right:-0.55px;">859</div>
<div class="a s" style="top:727.69px;font-size:11px;line-height:11px;color:#111;letter-spacing:0.55px;right:605.5px;margin-right:-0.55px;">865</div>
<div class="a s" style="top:727.69px;font-size:11px;line-height:11px;color:#111;letter-spacing:0.55px;right:516.5px;margin-right:-0.55px;">871</div>
<div class="a s" style="top:727.69px;font-size:11px;line-height:11px;color:#111;letter-spacing:0.55px;right:427.5px;margin-right:-0.55px;">877</div>
<div class="a s" style="top:727.69px;font-size:11px;line-height:11px;color:#111;letter-spacing:0.55px;right:338.5px;margin-right:-0.55px;">883</div>
<div class="a s" style="top:727.69px;font-size:11px;line-height:11px;color:#111;letter-spacing:0.55px;right:249.5px;margin-right:-0.55px;">890</div>
<div class="a s" style="top:727.69px;font-size:11px;line-height:11px;color:#111;letter-spacing:0.55px;right:160.5px;margin-right:-0.55px;">896</div>
<div class="a s" style="top:727.69px;font-size:11px;line-height:11px;color:#111;letter-spacing:0.55px;right:71.5px;margin-right:-0.55px;">903</div>
<div class="a s" style="top:763.69px;font-size:11px;line-height:11px;color:#0c0cb0;letter-spacing:0.55px;left:71px;">Senior Debt 1 interest expensed</div>
<div class="a s" style="top:763.69px;font-size:11px;line-height:11px;color:#0c0cb0;left:419px;transform-origin:0 0;transform:scaleX(0.9282);">EUR k</div>
<div class="a s" style="top:762.89px;font-size:11px;line-height:11px;color:#0c0cb0;right:1340.0px;">-</div>
<div class="a s" style="top:763.69px;font-size:11px;line-height:11px;color:#0c0cb0;letter-spacing:0.55px;right:1243.0px;margin-right:-0.55px;">(3,491)</div>
<div class="a s" style="top:762.89px;font-size:11px;line-height:11px;color:#0c0cb0;right:1141.0px;">-</div>
<div class="a s" style="top:763.69px;font-size:11px;line-height:11px;color:#0c0cb0;letter-spacing:0.55px;right:1046.0px;margin-right:-0.55px;">(400)</div>
<div class="a s" style="top:763.69px;font-size:11px;line-height:11px;color:#0c0cb0;letter-spacing:0.55px;right:957.0px;margin-right:-0.55px;">(380)</div>
<div class="a s" style="top:763.69px;font-size:11px;line-height:11px;color:#0c0cb0;letter-spacing:0.55px;right:868.0px;margin-right:-0.55px;">(359)</div>
<div class="a s" style="top:763.69px;font-size:11px;line-height:11px;color:#0c0cb0;letter-spacing:0.55px;right:779.0px;margin-right:-0.55px;">(338)</div>
<div class="a s" style="top:763.69px;font-size:11px;line-height:11px;color:#0c0cb0;letter-spacing:0.55px;right:690.0px;margin-right:-0.55px;">(315)</div>
<div class="a s" style="top:763.69px;font-size:11px;line-height:11px;color:#0c0cb0;letter-spacing:0.55px;right:601.0px;margin-right:-0.55px;">(292)</div>
<div class="a s" style="top:763.69px;font-size:11px;line-height:11px;color:#0c0cb0;letter-spacing:0.55px;right:512.0px;margin-right:-0.55px;">(267)</div>
<div class="a s" style="top:763.69px;font-size:11px;line-height:11px;color:#0c0cb0;letter-spacing:0.55px;right:423.0px;margin-right:-0.55px;">(242)</div>
<div class="a s" style="top:763.69px;font-size:11px;line-height:11px;color:#0c0cb0;letter-spacing:0.55px;right:334.0px;margin-right:-0.55px;">(216)</div>
<div class="a s" style="top:763.69px;font-size:11px;line-height:11px;color:#0c0cb0;letter-spacing:0.55px;right:245.0px;margin-right:-0.55px;">(189)</div>
<div class="a s" style="top:763.69px;font-size:11px;line-height:11px;color:#0c0cb0;letter-spacing:0.55px;right:156.0px;margin-right:-0.55px;">(160)</div>
<div class="a s" style="top:763.69px;font-size:11px;line-height:11px;color:#0c0cb0;letter-spacing:0.55px;right:67.0px;margin-right:-0.55px;">(131)</div>
<div class="a s" style="top:781.69px;font-size:11px;line-height:11px;color:#0c0cb0;letter-spacing:0.55px;left:71px;">Senior Debt 1 agency fees expensed</div>
<div class="a s" style="top:781.69px;font-size:11px;line-height:11px;color:#0c0cb0;left:419px;transform-origin:0 0;transform:scaleX(0.9282);">EUR k</div>
<div class="a s" style="top:780.89px;font-size:11px;line-height:11px;color:#0c0cb0;right:1340.0px;">-</div>
<div class="a s" style="top:780.89px;font-size:11px;line-height:11px;color:#0c0cb0;right:1249.0px;">-</div>
<div class="a s" style="top:780.89px;font-size:11px;line-height:11px;color:#0c0cb0;right:1141.0px;">-</div>
<div class="a s" style="top:780.89px;font-size:11px;line-height:11px;color:#0c0cb0;right:1052.0px;">-</div>
<div class="a s" style="top:780.89px;font-size:11px;line-height:11px;color:#0c0cb0;right:963.0px;">-</div>
<div class="a s" style="top:780.89px;font-size:11px;line-height:11px;color:#0c0cb0;right:874.0px;">-</div>
<div class="a s" style="top:780.89px;font-size:11px;line-height:11px;color:#0c0cb0;right:785.0px;">-</div>
<div class="a s" style="top:780.89px;font-size:11px;line-height:11px;color:#0c0cb0;right:696.0px;">-</div>
<div class="a s" style="top:780.89px;font-size:11px;line-height:11px;color:#0c0cb0;right:607.0px;">-</div>
<div class="a s" style="top:780.89px;font-size:11px;line-height:11px;color:#0c0cb0;right:518.0px;">-</div>
<div class="a s" style="top:780.89px;font-size:11px;line-height:11px;color:#0c0cb0;right:429.0px;">-</div>
<div class="a s" style="top:780.89px;font-size:11px;line-height:11px;color:#0c0cb0;right:340.0px;">-</div>
<div class="a s" style="top:780.89px;font-size:11px;line-height:11px;color:#0c0cb0;right:251.0px;">-</div>
<div class="a s" style="top:780.89px;font-size:11px;line-height:11px;color:#0c0cb0;right:162.0px;">-</div>
<div class="a s" style="top:780.89px;font-size:11px;line-height:11px;color:#0c0cb0;right:73.0px;">-</div>
<div class="a s" style="top:799.69px;font-size:11px;line-height:11px;color:#0c0cb0;letter-spacing:0.55px;left:71px;">Senior Debt 1 arrangement fees expensed</div>
<div class="a s" style="top:799.69px;font-size:11px;line-height:11px;color:#0c0cb0;left:419px;transform-origin:0 0;transform:scaleX(0.9282);">EUR k</div>
<div class="a s" style="top:798.89px;font-size:11px;line-height:11px;color:#0c0cb0;right:1340.0px;">-</div>
<div class="a s" style="top:798.89px;font-size:11px;line-height:11px;color:#0c0cb0;right:1249.0px;">-</div>
<div class="a s" style="top:798.89px;font-size:11px;line-height:11px;color:#0c0cb0;right:1141.0px;">-</div>
<div class="a s" style="top:798.89px;font-size:11px;line-height:11px;color:#0c0cb0;right:1052.0px;">-</div>
<div class="a s" style="top:798.89px;font-size:11px;line-height:11px;color:#0c0cb0;right:963.0px;">-</div>
<div class="a s" style="top:798.89px;font-size:11px;line-height:11px;color:#0c0cb0;right:874.0px;">-</div>
<div class="a s" style="top:798.89px;font-size:11px;line-height:11px;color:#0c0cb0;right:785.0px;">-</div>
<div class="a s" style="top:798.89px;font-size:11px;line-height:11px;color:#0c0cb0;right:696.0px;">-</div>
<div class="a s" style="top:798.89px;font-size:11px;line-height:11px;color:#0c0cb0;right:607.0px;">-</div>
<div class="a s" style="top:798.89px;font-size:11px;line-height:11px;color:#0c0cb0;right:518.0px;">-</div>
<div class="a s" style="top:798.89px;font-size:11px;line-height:11px;color:#0c0cb0;right:429.0px;">-</div>
<div class="a s" style="top:798.89px;font-size:11px;line-height:11px;color:#0c0cb0;right:340.0px;">-</div>
<div class="a s" style="top:798.89px;font-size:11px;line-height:11px;color:#0c0cb0;right:251.0px;">-</div>
<div class="a s" style="top:798.89px;font-size:11px;line-height:11px;color:#0c0cb0;right:162.0px;">-</div>
<div class="a s" style="top:798.89px;font-size:11px;line-height:11px;color:#0c0cb0;right:73.0px;">-</div>
<div class="a s" style="top:817.69px;font-size:11px;line-height:11px;color:#0c0cb0;letter-spacing:0.55px;left:71px;">Senior Debt 1 commitment fees expensed</div>
<div class="a s" style="top:817.69px;font-size:11px;line-height:11px;color:#0c0cb0;left:419px;transform-origin:0 0;transform:scaleX(0.9282);">EUR k</div>
<div class="a s" style="top:816.89px;font-size:11px;line-height:11px;color:#0c0cb0;right:1340.0px;">-</div>
<div class="a s" style="top:816.89px;font-size:11px;line-height:11px;color:#0c0cb0;right:1249.0px;">-</div>
<div class="a s" style="top:816.89px;font-size:11px;line-height:11px;color:#0c0cb0;right:1141.0px;">-</div>
<div class="a s" style="top:816.89px;font-size:11px;line-height:11px;color:#0c0cb0;right:1052.0px;">-</div>
<div class="a s" style="top:816.89px;font-size:11px;line-height:11px;color:#0c0cb0;right:963.0px;">-</div>
<div class="a s" style="top:816.89px;font-size:11px;line-height:11px;color:#0c0cb0;right:874.0px;">-</div>
<div class="a s" style="top:816.89px;font-size:11px;line-height:11px;color:#0c0cb0;right:785.0px;">-</div>
<div class="a s" style="top:816.89px;font-size:11px;line-height:11px;color:#0c0cb0;right:696.0px;">-</div>
<div class="a s" style="top:816.89px;font-size:11px;line-height:11px;color:#0c0cb0;right:607.0px;">-</div>
<div class="a s" style="top:816.89px;font-size:11px;line-height:11px;color:#0c0cb0;right:518.0px;">-</div>
<div class="a s" style="top:816.89px;font-size:11px;line-height:11px;color:#0c0cb0;right:429.0px;">-</div>
<div class="a s" style="top:816.89px;font-size:11px;line-height:11px;color:#0c0cb0;right:340.0px;">-</div>
<div class="a s" style="top:816.89px;font-size:11px;line-height:11px;color:#0c0cb0;right:251.0px;">-</div>
<div class="a s" style="top:816.89px;font-size:11px;line-height:11px;color:#0c0cb0;right:162.0px;">-</div>
<div class="a s" style="top:816.89px;font-size:11px;line-height:11px;color:#0c0cb0;right:73.0px;">-</div>
<div class="a s" style="top:835.69px;font-size:11px;line-height:11px;color:#0c0cb0;letter-spacing:0.55px;left:71px;">Senior Debt 2 interest expensed</div>
<div class="a s" style="top:835.69px;font-size:11px;line-height:11px;color:#0c0cb0;left:419px;transform-origin:0 0;transform:scaleX(0.9282);">EUR k</div>
<div class="a s" style="top:834.89px;font-size:11px;line-height:11px;color:#0c0cb0;right:1340.0px;">-</div>
<div class="a s" style="top:835.69px;font-size:11px;line-height:11px;color:#0c0cb0;letter-spacing:0.55px;right:1243.0px;margin-right:-0.55px;">(307)</div>
<div class="a s" style="top:834.89px;font-size:11px;line-height:11px;color:#0c0cb0;right:1141.0px;">-</div>
<div class="a s" style="top:835.69px;font-size:11px;line-height:11px;color:#0c0cb0;letter-spacing:0.55px;right:1046.0px;margin-right:-0.55px;">(38)</div>
<div class="a s" style="top:835.69px;font-size:11px;line-height:11px;color:#0c0cb0;letter-spacing:0.55px;right:957.0px;margin-right:-0.55px;">(36)</div>
<div class="a s" style="top:835.69px;font-size:11px;line-height:11px;color:#0c0cb0;letter-spacing:0.55px;right:868.0px;margin-right:-0.55px;">(33)</div>
<div class="a s" style="top:835.69px;font-size:11px;line-height:11px;color:#0c0cb0;letter-spacing:0.55px;right:779.0px;margin-right:-0.55px;">(31)</div>
<div class="a s" style="top:835.69px;font-size:11px;line-height:11px;color:#0c0cb0;letter-spacing:0.55px;right:690.0px;margin-right:-0.55px;">(28)</div>
<div class="a s" style="top:835.69px;font-size:11px;line-height:11px;color:#0c0cb0;letter-spacing:0.55px;right:601.0px;margin-right:-0.55px;">(26)</div>
<div class="a s" style="top:835.69px;font-size:11px;line-height:11px;color:#0c0cb0;letter-spacing:0.55px;right:512.0px;margin-right:-0.55px;">(23)</div>
<div class="a s" style="top:835.69px;font-size:11px;line-height:11px;color:#0c0cb0;letter-spacing:0.55px;right:423.0px;margin-right:-0.55px;">(20)</div>
<div class="a s" style="top:835.69px;font-size:11px;line-height:11px;color:#0c0cb0;letter-spacing:0.55px;right:334.0px;margin-right:-0.55px;">(18)</div>
<div class="a s" style="top:835.69px;font-size:11px;line-height:11px;color:#0c0cb0;letter-spacing:0.55px;right:245.0px;margin-right:-0.55px;">(15)</div>
<div class="a s" style="top:835.69px;font-size:11px;line-height:11px;color:#0c0cb0;letter-spacing:0.55px;right:156.0px;margin-right:-0.55px;">(13)</div>
<div class="a s" style="top:835.69px;font-size:11px;line-height:11px;color:#0c0cb0;letter-spacing:0.55px;right:67.0px;margin-right:-0.55px;">(10)</div>
<div class="a s" style="top:853.69px;font-size:11px;line-height:11px;color:#0c0cb0;letter-spacing:0.55px;left:71px;">Senior Debt 2 agency fees expensed</div>
<div class="a s" style="top:853.69px;font-size:11px;line-height:11px;color:#0c0cb0;left:419px;transform-origin:0 0;transform:scaleX(0.9282);">EUR k</div>
<div class="a s" style="top:852.89px;font-size:11px;line-height:11px;color:#0c0cb0;right:1340.0px;">-</div>
<div class="a s" style="top:852.89px;font-size:11px;line-height:11px;color:#0c0cb0;right:1249.0px;">-</div>
<div class="a s" style="top:852.89px;font-size:11px;line-height:11px;color:#0c0cb0;right:1141.0px;">-</div>
<div class="a s" style="top:852.89px;font-size:11px;line-height:11px;color:#0c0cb0;right:1052.0px;">-</div>
<div class="a s" style="top:852.89px;font-size:11px;line-height:11px;color:#0c0cb0;right:963.0px;">-</div>
<div class="a s" style="top:852.89px;font-size:11px;line-height:11px;color:#0c0cb0;right:874.0px;">-</div>
<div class="a s" style="top:852.89px;font-size:11px;line-height:11px;color:#0c0cb0;right:785.0px;">-</div>
<div class="a s" style="top:852.89px;font-size:11px;line-height:11px;color:#0c0cb0;right:696.0px;">-</div>
<div class="a s" style="top:852.89px;font-size:11px;line-height:11px;color:#0c0cb0;right:607.0px;">-</div>
<div class="a s" style="top:852.89px;font-size:11px;line-height:11px;color:#0c0cb0;right:518.0px;">-</div>
<div class="a s" style="top:852.89px;font-size:11px;line-height:11px;color:#0c0cb0;right:429.0px;">-</div>
<div class="a s" style="top:852.89px;font-size:11px;line-height:11px;color:#0c0cb0;right:340.0px;">-</div>
<div class="a s" style="top:852.89px;font-size:11px;line-height:11px;color:#0c0cb0;right:251.0px;">-</div>
<div class="a s" style="top:852.89px;font-size:11px;line-height:11px;color:#0c0cb0;right:162.0px;">-</div>
<div class="a s" style="top:852.89px;font-size:11px;line-height:11px;color:#0c0cb0;right:73.0px;">-</div>
<div class="a s" style="top:871.69px;font-size:11px;line-height:11px;color:#0c0cb0;letter-spacing:0.55px;left:71px;">Senior Debt 2 arrangement fees expensed</div>
<div class="a s" style="top:871.69px;font-size:11px;line-height:11px;color:#0c0cb0;left:419px;transform-origin:0 0;transform:scaleX(0.9282);">EUR k</div>
<div class="a s" style="top:870.89px;font-size:11px;line-height:11px;color:#0c0cb0;right:1340.0px;">-</div>
<div class="a s" style="top:870.89px;font-size:11px;line-height:11px;color:#0c0cb0;right:1249.0px;">-</div>
<div class="a s" style="top:870.89px;font-size:11px;line-height:11px;color:#0c0cb0;right:1141.0px;">-</div>
<div class="a s" style="top:870.89px;font-size:11px;line-height:11px;color:#0c0cb0;right:1052.0px;">-</div>
<div class="a s" style="top:870.89px;font-size:11px;line-height:11px;color:#0c0cb0;right:963.0px;">-</div>
<div class="a s" style="top:870.89px;font-size:11px;line-height:11px;color:#0c0cb0;right:874.0px;">-</div>
<div class="a s" style="top:870.89px;font-size:11px;line-height:11px;color:#0c0cb0;right:785.0px;">-</div>
<div class="a s" style="top:870.89px;font-size:11px;line-height:11px;color:#0c0cb0;right:696.0px;">-</div>
<div class="a s" style="top:870.89px;font-size:11px;line-height:11px;color:#0c0cb0;right:607.0px;">-</div>
<div class="a s" style="top:870.89px;font-size:11px;line-height:11px;color:#0c0cb0;right:518.0px;">-</div>
<div class="a s" style="top:870.89px;font-size:11px;line-height:11px;color:#0c0cb0;right:429.0px;">-</div>
<div class="a s" style="top:870.89px;font-size:11px;line-height:11px;color:#0c0cb0;right:340.0px;">-</div>
<div class="a s" style="top:870.89px;font-size:11px;line-height:11px;color:#0c0cb0;right:251.0px;">-</div>
<div class="a s" style="top:870.89px;font-size:11px;line-height:11px;color:#0c0cb0;right:162.0px;">-</div>
<div class="a s" style="top:870.89px;font-size:11px;line-height:11px;color:#0c0cb0;right:73.0px;">-</div>
<div class="a s" style="top:889.69px;font-size:11px;line-height:11px;color:#0c0cb0;letter-spacing:0.55px;left:71px;">Senior Debt 2 commitment fees expensed</div>
<div class="a s" style="top:889.69px;font-size:11px;line-height:11px;color:#0c0cb0;left:419px;transform-origin:0 0;transform:scaleX(0.9282);">EUR k</div>
<div class="a s" style="top:888.89px;font-size:11px;line-height:11px;color:#0c0cb0;right:1340.0px;">-</div>
<div class="a s" style="top:888.89px;font-size:11px;line-height:11px;color:#0c0cb0;right:1249.0px;">-</div>
<div class="a s" style="top:888.89px;font-size:11px;line-height:11px;color:#0c0cb0;right:1141.0px;">-</div>
<div class="a s" style="top:888.89px;font-size:11px;line-height:11px;color:#0c0cb0;right:1052.0px;">-</div>
<div class="a s" style="top:888.89px;font-size:11px;line-height:11px;color:#0c0cb0;right:963.0px;">-</div>
<div class="a s" style="top:888.89px;font-size:11px;line-height:11px;color:#0c0cb0;right:874.0px;">-</div>
<div class="a s" style="top:888.89px;font-size:11px;line-height:11px;color:#0c0cb0;right:785.0px;">-</div>
<div class="a s" style="top:888.89px;font-size:11px;line-height:11px;color:#0c0cb0;right:696.0px;">-</div>
<div class="a s" style="top:888.89px;font-size:11px;line-height:11px;color:#0c0cb0;right:607.0px;">-</div>
<div class="a s" style="top:888.89px;font-size:11px;line-height:11px;color:#0c0cb0;right:518.0px;">-</div>
<div class="a s" style="top:888.89px;font-size:11px;line-height:11px;color:#0c0cb0;right:429.0px;">-</div>
<div class="a s" style="top:888.89px;font-size:11px;line-height:11px;color:#0c0cb0;right:340.0px;">-</div>
<div class="a s" style="top:888.89px;font-size:11px;line-height:11px;color:#0c0cb0;right:251.0px;">-</div>
<div class="a s" style="top:888.89px;font-size:11px;line-height:11px;color:#0c0cb0;right:162.0px;">-</div>
<div class="a s" style="top:888.89px;font-size:11px;line-height:11px;color:#0c0cb0;right:73.0px;">-</div>
<div class="a s" style="top:907.69px;font-size:11px;line-height:11px;color:#0c0cb0;letter-spacing:0.55px;left:71px;">Sub debt interest expensed</div>
<div class="a s" style="top:907.69px;font-size:11px;line-height:11px;color:#0c0cb0;left:419px;transform-origin:0 0;transform:scaleX(0.9282);">EUR k</div>
<div class="a s" style="top:906.89px;font-size:11px;line-height:11px;color:#0c0cb0;right:1340.0px;">-</div>
<div class="a s" style="top:906.89px;font-size:11px;line-height:11px;color:#0c0cb0;right:1249.0px;">-</div>
<div class="a s" style="top:906.89px;font-size:11px;line-height:11px;color:#0c0cb0;right:1141.0px;">-</div>
<div class="a s" style="top:906.89px;font-size:11px;line-height:11px;color:#0c0cb0;right:1052.0px;">-</div>
<div class="a s" style="top:906.89px;font-size:11px;line-height:11px;color:#0c0cb0;right:963.0px;">-</div>
<div class="a s" style="top:906.89px;font-size:11px;line-height:11px;color:#0c0cb0;right:874.0px;">-</div>
<div class="a s" style="top:906.89px;font-size:11px;line-height:11px;color:#0c0cb0;right:785.0px;">-</div>
<div class="a s" style="top:906.89px;font-size:11px;line-height:11px;color:#0c0cb0;right:696.0px;">-</div>
<div class="a s" style="top:906.89px;font-size:11px;line-height:11px;color:#0c0cb0;right:607.0px;">-</div>
<div class="a s" style="top:906.89px;font-size:11px;line-height:11px;color:#0c0cb0;right:518.0px;">-</div>
<div class="a s" style="top:906.89px;font-size:11px;line-height:11px;color:#0c0cb0;right:429.0px;">-</div>
<div class="a s" style="top:906.89px;font-size:11px;line-height:11px;color:#0c0cb0;right:340.0px;">-</div>
<div class="a s" style="top:906.89px;font-size:11px;line-height:11px;color:#0c0cb0;right:251.0px;">-</div>
<div class="a s" style="top:906.89px;font-size:11px;line-height:11px;color:#0c0cb0;right:162.0px;">-</div>
<div class="a s" style="top:906.89px;font-size:11px;line-height:11px;color:#0c0cb0;right:73.0px;">-</div>
<div class="a s" style="top:925.69px;font-size:11px;line-height:11px;color:#0c0cb0;letter-spacing:0.55px;left:71px;">Retained cash interest earnings accrued</div>
<div class="a s" style="top:925.69px;font-size:11px;line-height:11px;color:#0c0cb0;left:419px;transform-origin:0 0;transform:scaleX(0.9282);">EUR k</div>
<div class="a s" style="top:924.89px;font-size:11px;line-height:11px;color:#0c0cb0;right:1340.0px;">-</div>
<div class="a s" style="top:925.69px;font-size:11px;line-height:11px;color:#0c0cb0;letter-spacing:0.55px;right:1247.5px;margin-right:-0.55px;">16</div>
<div class="a s" style="top:924.89px;font-size:11px;line-height:11px;color:#0c0cb0;right:1141.0px;">-</div>
<div class="a s" style="top:925.69px;font-size:11px;line-height:11px;color:#0c0cb0;letter-spacing:0.55px;right:1050.5px;margin-right:-0.55px;">5</div>
<div class="a s" style="top:924.89px;font-size:11px;line-height:11px;color:#0c0cb0;right:963.0px;">-</div>
<div class="a s" style="top:924.89px;font-size:11px;line-height:11px;color:#0c0cb0;right:874.0px;">-</div>
<div class="a s" style="top:924.89px;font-size:11px;line-height:11px;color:#0c0cb0;right:785.0px;">-</div>
<div class="a s" style="top:924.89px;font-size:11px;line-height:11px;color:#0c0cb0;right:696.0px;">-</div>
<div class="a s" style="top:924.89px;font-size:11px;line-height:11px;color:#0c0cb0;right:607.0px;">-</div>
<div class="a s" style="top:924.89px;font-size:11px;line-height:11px;color:#0c0cb0;right:518.0px;">-</div>
<div class="a s" style="top:924.89px;font-size:11px;line-height:11px;color:#0c0cb0;right:429.0px;">-</div>
<div class="a s" style="top:924.89px;font-size:11px;line-height:11px;color:#0c0cb0;right:340.0px;">-</div>
<div class="a s" style="top:924.89px;font-size:11px;line-height:11px;color:#0c0cb0;right:251.0px;">-</div>
<div class="a s" style="top:924.89px;font-size:11px;line-height:11px;color:#0c0cb0;right:162.0px;">-</div>
<div class="a s" style="top:924.89px;font-size:11px;line-height:11px;color:#0c0cb0;right:73.0px;">-</div>
<div class="a s" style="top:943.69px;font-size:11px;line-height:11px;color:#0c0cb0;letter-spacing:0.55px;left:71px;">DSRA interest earnings accrued</div>
<div class="a s" style="top:943.69px;font-size:11px;line-height:11px;color:#0c0cb0;left:419px;transform-origin:0 0;transform:scaleX(0.9282);">EUR k</div>
<div class="a s" style="top:942.89px;font-size:11px;line-height:11px;color:#0c0cb0;right:1340.0px;">-</div>
<div class="a s" style="top:943.69px;font-size:11px;line-height:11px;color:#0c0cb0;letter-spacing:0.55px;right:1247.5px;margin-right:-0.55px;">73</div>
<div class="a s" style="top:942.89px;font-size:11px;line-height:11px;color:#0c0cb0;right:1141.0px;">-</div>
<div class="a s" style="top:943.69px;font-size:11px;line-height:11px;color:#0c0cb0;letter-spacing:0.55px;right:1050.5px;margin-right:-0.55px;">5</div>
<div class="a s" style="top:943.69px;font-size:11px;line-height:11px;color:#0c0cb0;letter-spacing:0.55px;right:961.5px;margin-right:-0.55px;">5</div>
<div class="a s" style="top:943.69px;font-size:11px;line-height:11px;color:#0c0cb0;letter-spacing:0.55px;right:872.5px;margin-right:-0.55px;">5</div>
<div class="a s" style="top:943.69px;font-size:11px;line-height:11px;color:#0c0cb0;letter-spacing:0.55px;right:783.5px;margin-right:-0.55px;">5</div>
<div class="a s" style="top:943.69px;font-size:11px;line-height:11px;color:#0c0cb0;letter-spacing:0.55px;right:694.5px;margin-right:-0.55px;">5</div>
<div class="a s" style="top:943.69px;font-size:11px;line-height:11px;color:#0c0cb0;letter-spacing:0.55px;right:605.5px;margin-right:-0.55px;">5</div>
<div class="a s" style="top:943.69px;font-size:11px;line-height:11px;color:#0c0cb0;letter-spacing:0.55px;right:516.5px;margin-right:-0.55px;">5</div>
<div class="a s" style="top:943.69px;font-size:11px;line-height:11px;color:#0c0cb0;letter-spacing:0.55px;right:427.5px;margin-right:-0.55px;">5</div>
<div class="a s" style="top:943.69px;font-size:11px;line-height:11px;color:#0c0cb0;letter-spacing:0.55px;right:338.5px;margin-right:-0.55px;">5</div>
<div class="a s" style="top:943.69px;font-size:11px;line-height:11px;color:#0c0cb0;letter-spacing:0.55px;right:249.5px;margin-right:-0.55px;">5</div>
<div class="a s" style="top:943.69px;font-size:11px;line-height:11px;color:#0c0cb0;letter-spacing:0.55px;right:160.5px;margin-right:-0.55px;">5</div>
<div class="a s" style="top:943.69px;font-size:11px;line-height:11px;color:#0c0cb0;letter-spacing:0.55px;right:71.5px;margin-right:-0.55px;">5</div>
<div class="a s" style="top:961.69px;font-size:11px;line-height:11px;color:#0c0cb0;letter-spacing:0.55px;left:71px;">Overdraft interest due</div>
<div class="a s" style="top:961.69px;font-size:11px;line-height:11px;color:#0c0cb0;left:419px;transform-origin:0 0;transform:scaleX(0.9282);">EUR k</div>
<div class="a s" style="top:960.89px;font-size:11px;line-height:11px;color:#0c0cb0;right:1340.0px;">-</div>
<div class="a s" style="top:960.89px;font-size:11px;line-height:11px;color:#0c0cb0;right:1249.0px;">-</div>
<div class="a s" style="top:960.89px;font-size:11px;line-height:11px;color:#0c0cb0;right:1141.0px;">-</div>
<div class="a s" style="top:960.89px;font-size:11px;line-height:11px;color:#0c0cb0;right:1052.0px;">-</div>
<div class="a s" style="top:960.89px;font-size:11px;line-height:11px;color:#0c0cb0;right:963.0px;">-</div>
<div class="a s" style="top:960.89px;font-size:11px;line-height:11px;color:#0c0cb0;right:874.0px;">-</div>
<div class="a s" style="top:960.89px;font-size:11px;line-height:11px;color:#0c0cb0;right:785.0px;">-</div>
<div class="a s" style="top:960.89px;font-size:11px;line-height:11px;color:#0c0cb0;right:696.0px;">-</div>
<div class="a s" style="top:960.89px;font-size:11px;line-height:11px;color:#0c0cb0;right:607.0px;">-</div>
<div class="a s" style="top:960.89px;font-size:11px;line-height:11px;color:#0c0cb0;right:518.0px;">-</div>
<div class="a s" style="top:960.89px;font-size:11px;line-height:11px;color:#0c0cb0;right:429.0px;">-</div>
<div class="a s" style="top:960.89px;font-size:11px;line-height:11px;color:#0c0cb0;right:340.0px;">-</div>
<div class="a s" style="top:960.89px;font-size:11px;line-height:11px;color:#0c0cb0;right:251.0px;">-</div>
<div class="a s" style="top:960.89px;font-size:11px;line-height:11px;color:#0c0cb0;right:162.0px;">-</div>
<div class="a s" style="top:960.89px;font-size:11px;line-height:11px;color:#0c0cb0;right:73.0px;">-</div>
<div class="a s" style="top:979.69px;font-size:11px;line-height:11px;color:#bd1010;letter-spacing:0.55px;left:71px;">PBT</div>
<div class="a s" style="top:979.69px;font-size:11px;line-height:11px;color:#bd1010;left:419px;transform-origin:0 0;transform:scaleX(0.9282);">EUR k</div>
<div class="a s" style="top:978.89px;font-size:11px;line-height:11px;color:#bd1010;right:1340.0px;">-</div>
<div class="a s" style="top:979.69px;font-size:11px;line-height:11px;color:#bd1010;letter-spacing:0.55px;right:1247.5px;margin-right:-0.55px;">23,477</div>
<div class="a s" style="top:978.89px;font-size:11px;line-height:11px;color:#bd1010;right:1141.0px;">-</div>
<div class="a s" style="top:979.69px;font-size:11px;line-height:11px;color:#bd1010;letter-spacing:0.55px;right:1050.5px;margin-right:-0.55px;">402</div>
<div class="a s" style="top:979.69px;font-size:11px;line-height:11px;color:#bd1010;letter-spacing:0.55px;right:961.5px;margin-right:-0.55px;">429</div>
<div class="a s" style="top:979.69px;font-size:11px;line-height:11px;color:#bd1010;letter-spacing:0.55px;right:872.5px;margin-right:-0.55px;">460</div>
<div class="a s" style="top:979.69px;font-size:11px;line-height:11px;color:#bd1010;letter-spacing:0.55px;right:783.5px;margin-right:-0.55px;">490</div>
<div class="a s" style="top:979.69px;font-size:11px;line-height:11px;color:#bd1010;letter-spacing:0.55px;right:694.5px;margin-right:-0.55px;">521</div>
<div class="a s" style="top:979.69px;font-size:11px;line-height:11px;color:#bd1010;letter-spacing:0.55px;right:605.5px;margin-right:-0.55px;">553</div>
<div class="a s" style="top:979.69px;font-size:11px;line-height:11px;color:#bd1010;letter-spacing:0.55px;right:516.5px;margin-right:-0.55px;">586</div>
<div class="a s" style="top:979.69px;font-size:11px;line-height:11px;color:#bd1010;letter-spacing:0.55px;right:427.5px;margin-right:-0.55px;">619</div>
<div class="a s" style="top:979.69px;font-size:11px;line-height:11px;color:#bd1010;letter-spacing:0.55px;right:338.5px;margin-right:-0.55px;">654</div>
<div class="a s" style="top:979.69px;font-size:11px;line-height:11px;color:#bd1010;letter-spacing:0.55px;right:249.5px;margin-right:-0.55px;">691</div>
<div class="a s" style="top:979.69px;font-size:11px;line-height:11px;color:#bd1010;letter-spacing:0.55px;right:160.5px;margin-right:-0.55px;">728</div>
<div class="a s" style="top:979.69px;font-size:11px;line-height:11px;color:#bd1010;letter-spacing:0.55px;right:71.5px;margin-right:-0.55px;">767</div>
<div class="a s" style="top:1015.69px;font-size:11px;line-height:11px;color:#0c0cb0;letter-spacing:0.55px;left:71px;">Corporation tax due</div>
<div class="a s" style="top:1015.69px;font-size:11px;line-height:11px;color:#0c0cb0;left:419px;transform-origin:0 0;transform:scaleX(0.9282);">EUR k</div>
<div class="a s" style="top:1014.89px;font-size:11px;line-height:11px;color:#0c0cb0;right:1340.0px;">-</div>
<div class="a s" style="top:1015.69px;font-size:11px;line-height:11px;color:#0c0cb0;letter-spacing:0.55px;right:1243.0px;margin-right:-0.55px;">(5,165)</div>
<div class="a s" style="top:1014.89px;font-size:11px;line-height:11px;color:#0c0cb0;right:1141.0px;">-</div>
<div class="a s" style="top:1015.69px;font-size:11px;line-height:11px;color:#0c0cb0;letter-spacing:0.55px;right:1046.0px;margin-right:-0.55px;">(88)</div>
<div class="a s" style="top:1015.69px;font-size:11px;line-height:11px;color:#0c0cb0;letter-spacing:0.55px;right:957.0px;margin-right:-0.55px;">(94)</div>
<div class="a s" style="top:1015.69px;font-size:11px;line-height:11px;color:#0c0cb0;letter-spacing:0.55px;right:868.0px;margin-right:-0.55px;">(101)</div>
<div class="a s" style="top:1015.69px;font-size:11px;line-height:11px;color:#0c0cb0;letter-spacing:0.55px;right:779.0px;margin-right:-0.55px;">(108)</div>
<div class="a s" style="top:1015.69px;font-size:11px;line-height:11px;color:#0c0cb0;letter-spacing:0.55px;right:690.0px;margin-right:-0.55px;">(115)</div>
<div class="a s" style="top:1015.69px;font-size:11px;line-height:11px;color:#0c0cb0;letter-spacing:0.55px;right:601.0px;margin-right:-0.55px;">(122)</div>
<div class="a s" style="top:1015.69px;font-size:11px;line-height:11px;color:#0c0cb0;letter-spacing:0.55px;right:512.0px;margin-right:-0.55px;">(129)</div>
<div class="a s" style="top:1015.69px;font-size:11px;line-height:11px;color:#0c0cb0;letter-spacing:0.55px;right:423.0px;margin-right:-0.55px;">(136)</div>
<div class="a s" style="top:1015.69px;font-size:11px;line-height:11px;color:#0c0cb0;letter-spacing:0.55px;right:334.0px;margin-right:-0.55px;">(144)</div>
<div class="a s" style="top:1015.69px;font-size:11px;line-height:11px;color:#0c0cb0;letter-spacing:0.55px;right:245.0px;margin-right:-0.55px;">(152)</div>
<div class="a s" style="top:1015.69px;font-size:11px;line-height:11px;color:#0c0cb0;letter-spacing:0.55px;right:156.0px;margin-right:-0.55px;">(160)</div>
<div class="a s" style="top:1015.69px;font-size:11px;line-height:11px;color:#0c0cb0;letter-spacing:0.55px;right:67.0px;margin-right:-0.55px;">(169)</div>
</div>
<div class="a" style="left:697px;top:470px;width:92px;height:21px;border:2px solid #1e6e42;border-right:none;border-bottom:none"></div>
<div class="a" style="left:787px;top:470px;width:2px;height:16px;background:#1e6e42"></div>
<div class="a" style="left:697px;top:489px;width:88px;height:2px;background:#1e6e42"></div>
<div class="a" style="left:785px;top:487px;width:5.5px;height:5.5px;background:#1e7145;outline:1px solid #fff"></div>
<div class="a" style="left:1895px;top:136px;width:25px;height:916px;background:#e6e6e6"></div>
<div class="a" style="left:1898px;top:138px;width:19px;height:18px;background:#fff;border:1px solid #b4b4b4"></div>
<svg class="a" style="left:1902px;top:143px" width="11" height="7"><path d="M0.5 6 H10.5 L5.5 0.5 Z" fill="#606060"/></svg>
<div class="a" style="left:1898px;top:157px;width:19px;height:205.5px;background:#fff;border:1px solid #b4b4b4"></div>
<div class="a" style="left:1898px;top:362px;width:19px;height:642px;background:#dadada"></div>
<div class="a" style="left:1898px;top:1004.5px;width:19px;height:18px;background:#fff;border:1px solid #b4b4b4"></div>
<svg class="a" style="left:1902px;top:1011px" width="11" height="7"><path d="M0.5 0.5 H10.5 L5.5 6 Z" fill="#606060"/></svg>
<div class="a" style="left:0px;top:1023px;width:1895px;height:29px;background:#e6e6e6;border-top:1px solid #c6c6c6"></div>
<div class="a" style="left:0px;top:1051.5px;width:1920px;height:1px;background:#c8c8c8"></div>
<svg class="a" style="left:28px;top:1032px" width="7" height="11"><path d="M6.5 0.5 V10.5 L0.5 5.5 Z" fill="#bdbdbd"/></svg>
<svg class="a" style="left:56px;top:1032px" width="7" height="11"><path d="M0.5 0.5 V10.5 L6.5 5.5 Z" fill="#1e6e42"/></svg>
<div class="a" style="left:106px;top:1026px;width:65px;height:23px;background:#983434"></div>
<div class="a" style="top:1026.11px;font-size:17px;line-height:17px;color:#fff;left:138.5px;transform:translateX(-50%) ;">Cover</div>
<div class="a" style="left:176px;top:1026px;width:103px;height:23px;background:#983434"></div>
<div class="a" style="top:1026.11px;font-size:17px;line-height:17px;color:#fff;left:227.5px;transform:translateX(-50%) ;">Disclaimer</div>
<div class="a" style="left:284px;top:1026px;width:48px;height:23px;background:#983434"></div>
<div class="a" style="top:1026.11px;font-size:17px;line-height:17px;color:#fff;left:308.0px;transform:translateX(-50%) ;">Key</div>
<div class="a" style="left:337px;top:1026px;width:49px;height:23px;background:#ccffff"></div>
<div class="a" style="top:1026.11px;font-size:17px;line-height:17px;color:#111;left:361.5px;transform:translateX(-50%) ;">Log</div>
<div class="a" style="left:391px;top:1026px;width:106px;height:23px;background:#2e74a0"></div>
<div class="a" style="top:1026.11px;font-size:17px;line-height:17px;color:#fff;left:444.0px;transform:translateX(-50%) ;">Dashboard</div>
<div class="a" style="left:582.5px;top:1026px;width:77.5px;height:23px;background:#ffffcc"></div>
<div class="a" style="top:1026.11px;font-size:17px;line-height:17px;color:#111;left:621.25px;transform:translateX(-50%) ;">Actuals</div>
<div class="a" style="left:665px;top:1026px;width:103px;height:23px;background:#ffffcc"></div>
<div class="a" style="top:1026.11px;font-size:17px;line-height:17px;color:#111;left:716.5px;transform:translateX(-50%) ;">Scenario C</div>
<div class="a" style="left:773px;top:1026px;width:102px;height:23px;background:#ffffcc"></div>
<div class="a" style="top:1026.11px;font-size:17px;line-height:17px;color:#111;left:824.0px;transform:translateX(-50%) ;">Scenario S</div>
<div class="a" style="left:880px;top:1026px;width:102px;height:23px;background:#ffffcc"></div>
<div class="a" style="top:1026.11px;font-size:17px;line-height:17px;color:#111;left:931.0px;transform:translateX(-50%) ;">Sensitivity</div>
<div class="a" style="left:987px;top:1026px;width:82px;height:23px;background:#c0c0c0"></div>
<div class="a" style="top:1026.11px;font-size:17px;line-height:17px;color:#111;left:1028.0px;transform:translateX(-50%) ;">Convert</div>
<div class="a" style="left:103px;top:1027px;width:1px;height:21px;background:#a8a8a8"></div>
<div class="a" style="left:173px;top:1027px;width:1px;height:21px;background:#a8a8a8"></div>
<div class="a" style="left:281px;top:1027px;width:1px;height:21px;background:#a8a8a8"></div>
<div class="a" style="left:334.5px;top:1027px;width:1px;height:21px;background:#a8a8a8"></div>
<div class="a" style="left:388.5px;top:1027px;width:1px;height:21px;background:#a8a8a8"></div>
<div class="a" style="left:662.5px;top:1027px;width:1px;height:21px;background:#a8a8a8"></div>
<div class="a" style="left:770.5px;top:1027px;width:1px;height:21px;background:#a8a8a8"></div>
<div class="a" style="left:877.5px;top:1027px;width:1px;height:21px;background:#a8a8a8"></div>
<div class="a" style="left:984.5px;top:1027px;width:1px;height:21px;background:#a8a8a8"></div>
<div class="a" style="left:1071.5px;top:1027px;width:1px;height:21px;background:#a8a8a8"></div>
<div class="a" style="left:1074px;top:1027px;width:4px;height:21px;background:#bdbdbd"></div>
<div class="a" style="left:500px;top:1023px;width:81px;height:26px;background:linear-gradient(#ffffff 0%,#f4f7fa 45%,#c7d5e1 100%);border-left:1px solid #c6c6c6;border-right:1px solid #c6c6c6"></div>
<div class="a" style="left:498px;top:1046.5px;width:84px;height:3px;background:#1e6e42"></div>
<div class="a" style="top:1026.11px;font-size:17px;line-height:17px;color:#1e6e42;font-weight:700;left:540px;transform:translateX(-50%) scaleX(0.9721);">FinStat</div>
<div class="a" style="left:1085.5px;top:1038px;width:2.2px;height:2.2px;background:#1e6e42"></div>
<div class="a" style="left:1090.7px;top:1038px;width:2.2px;height:2.2px;background:#1e6e42"></div>
<div class="a" style="left:1096px;top:1038px;width:2.2px;height:2.2px;background:#1e6e42"></div>
<svg class="a" style="left:1110px;top:1027px" width="22" height="22"><circle cx="11" cy="11" r="9.7" fill="none" stroke="#777" stroke-width="1.3"/><path d="M11 5.5 V16.5 M5.5 11 H16.5" stroke="#777" stroke-width="1.5"/></svg>
<div class="a" style="left:1149px;top:1031px;width:3px;height:3px;background:#b0b0b0"></div>
<div class="a" style="left:1149px;top:1036px;width:3px;height:3px;background:#b0b0b0"></div>
<div class="a" style="left:1149px;top:1041px;width:3px;height:3px;background:#b0b0b0"></div>
<div class="a" style="left:1168px;top:1028px;width:707px;height:19px;background:#dadada"></div>
<div class="a" style="left:1167px;top:1028px;width:19px;height:19px;background:#fff;border:1px solid #c6c6c6"></div>
<svg class="a" style="left:1173px;top:1033px" width="7" height="10"><path d="M6.5 0.5 V9.5 L0.5 5 Z" fill="#606060"/></svg>
<div class="a" style="left:1186px;top:1028px;width:303px;height:19px;background:#fff;border:1px solid #c6c6c6"></div>
<div class="a" style="left:1874.5px;top:1028.5px;width:18.5px;height:18.5px;background:#fff;border:1px solid #c6c6c6"></div>
<svg class="a" style="left:1881px;top:1033px" width="7" height="10"><path d="M0.5 0.5 V9.5 L6.5 5 Z" fill="#606060"/></svg>
<div class="a" style="left:0px;top:1052.5px;width:1920px;height:25.5px;background:#f3f2f1"></div>
<div class="a" style="left:0px;top:1078px;width:1920px;height:2px;background:#3a3a3a"></div>
<div class="a" style="left:60px;top:1078px;width:430px;height:2px;background:#d6d6d6"></div>
<div class="a" style="left:864px;top:1078px;width:61px;height:2px;background:#8a8a8a"></div>
<div class="a" style="top:1058.30px;font-size:15px;line-height:15px;color:#444;left:9.5px;transform-origin:0 0;transform:scaleX(0.8072);">Ready</div>
<svg class="a" style="left:69px;top:1058px" width="19" height="17" viewBox="0 0 19 17"><g fill="none" stroke="#555" stroke-width="1.3"><path d="M1 15.5 V1 H17 V6"/><path d="M1 3.5 H17"/><path d="M3 6.5 H6 M3 9 H6 M3 11.5 H6 M3 14 H6"/><circle cx="12" cy="11.5" r="4.5"/><circle cx="12" cy="11.5" r="2" fill="#555"/></g></svg>
<div class="a" style="left:1555px;top:1053px;width:50px;height:25px;background:#d5d5d5"></div>
<svg class="a" style="left:1571px;top:1057px" width="17" height="17" viewBox="0 0 17 17"><g fill="#606060"><path d="M0 0 H17 V17 H0 Z M2 2 V5 H5 V2 Z M7 2 V5 H10 V2 Z M12 2 V5 H15 V2 Z M2 7 V10 H5 V7 Z M7 7 V10 H10 V7 Z M12 7 V10 H15 V7 Z M2 12 V15 H5 V12 Z M7 12 V15 H10 V12 Z M12 12 V15 H15 V12 Z" fill-rule="evenodd"/></g></svg>
<svg class="a" style="left:1621px;top:1057px" width="18" height="17" viewBox="0 0 18 17"><g fill="none" stroke="#606060" stroke-width="1.5"><rect x="0.75" y="0.75" width="16.5" height="15.5"/><rect x="4.75" y="3.25" width="8.5" height="10.5"/><path d="M6.5 6 H11.5 M6.5 8.5 H11.5 M6.5 11 H11.5" stroke-width="1.1"/></g></svg>
<svg class="a" style="left:1671px;top:1057px" width="18" height="17" viewBox="0 0 18 17"><g fill="none" stroke="#606060" stroke-width="1.5"><rect x="0.75" y="0.75" width="16.5" height="15.5"/><path d="M0.75 9.5 H11.5 V0.75 M6.2 0.75 V9.5"/></g></svg>
<div class="a" style="left:1712px;top:1064.5px;width:10px;height:1.5px;background:#555"></div>
<div class="a" style="left:1728px;top:1065px;width:125px;height:1px;background:#a8a8a8"></div>
<div class="a" style="left:1775px;top:1059px;width:6px;height:14px;background:#707070"></div>
<div class="a" style="left:1790px;top:1062px;width:1px;height:7px;background:#888"></div>
<svg class="a" style="left:1858px;top:1059px" width="11" height="11"><path d="M5.5 0 V11 M0 5.5 H11" stroke="#555" stroke-width="1.3"/></svg>
<div class="a" style="top:1059.15px;font-size:14px;line-height:14px;color:#555;left:1885px;transform-origin:0 0;transform:scaleX(0.8562);">80%</div>
</body></html>
